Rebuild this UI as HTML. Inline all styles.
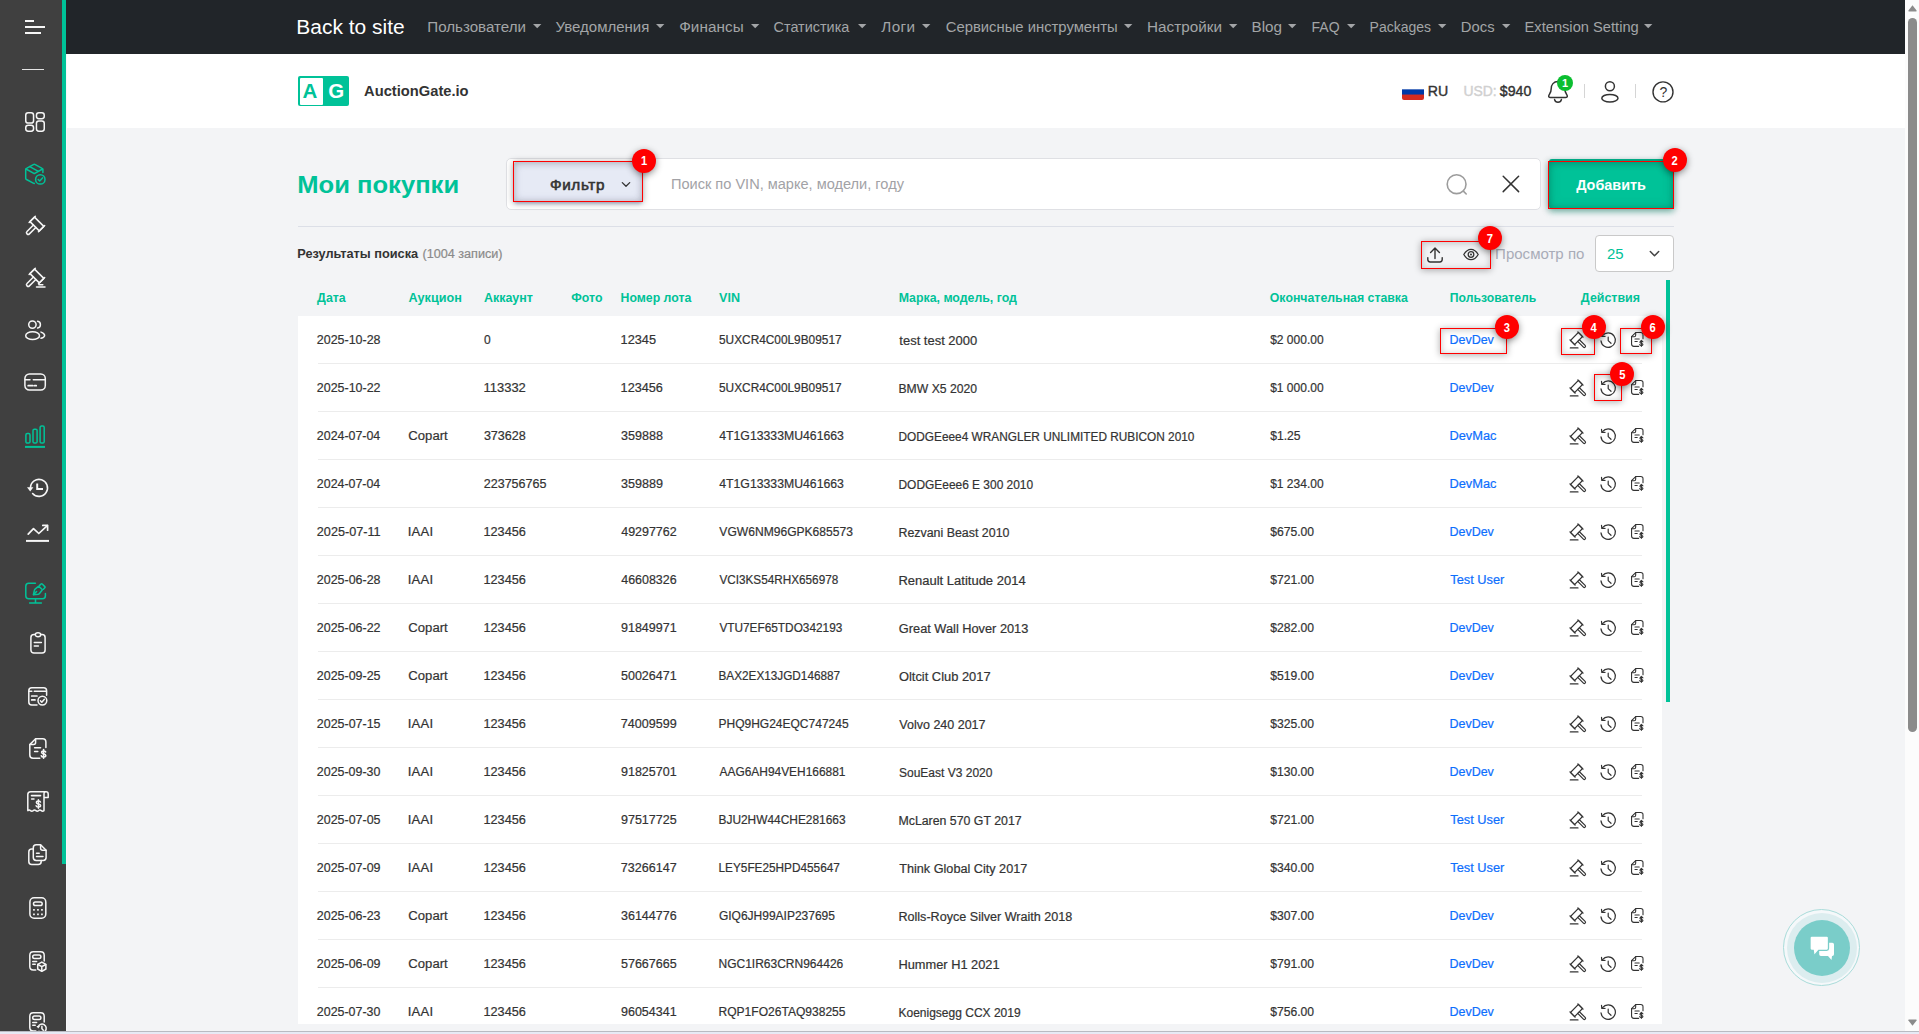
<!DOCTYPE html>
<html><head><meta charset="utf-8"><title>Мои покупки</title>
<style>
html,body{margin:0;padding:0;}
body{width:1919px;height:1034px;overflow:hidden;position:relative;background:#f3f4f6;font-family:"Liberation Sans",sans-serif;}
.t{position:absolute;white-space:pre;transform-origin:0 50%;}
svg{overflow:visible;}
</style></head><body>
<div style="position:absolute;left:66px;top:54px;width:1839px;height:74px;background:#fff;"></div>
<div style="position:absolute;left:66px;top:0px;width:1839px;height:54px;background:#212529;"></div>
<div style="position:absolute;left:0px;top:0px;width:66px;height:1031px;background:#404040;"></div>
<div style="position:absolute;left:62px;top:0px;width:4px;height:864px;background:#00c298;"></div>
<div style="position:absolute;left:66px;top:54px;width:1px;height:977px;background:#f8f8fa;"></div>
<div style="position:absolute;left:1905px;top:0px;width:14px;height:1031px;background:#fcfcfc;"></div>
<div style="position:absolute;left:1908px;top:18px;width:9px;height:714px;background:#8b8b8b;border-radius:5px;"></div>
<svg style="position:absolute;left:1908px;top:5px;" width="9" height="7" viewBox="0 0 9 7" fill="none"><path d="M4.5 0.3 L8.6 5.6 Q8.9 6.6 8 6.6 L1 6.6 Q0.1 6.6 0.4 5.6 Z" fill="#8b8b8b"/></svg>
<svg style="position:absolute;left:1908px;top:1019px;" width="9" height="7" viewBox="0 0 9 7" fill="none"><path d="M4.5 6.7 L8.6 1.4 Q8.9 0.4 8 0.4 L1 0.4 Q0.1 0.4 0.4 1.4 Z" fill="#8b8b8b"/></svg>
<div style="position:absolute;left:0px;top:1031px;width:1919px;height:3px;background:#e7eaf5;"></div>
<div style="position:absolute;left:0px;top:1031px;width:1919px;height:1px;background:#b9bbc2;"></div>
<span class="t" style="left:296px;top:16px;font-size:20px;line-height:20px;letter-spacing:0.000px;color:#fff;transform:translate(0.30px,0.82px) scaleX(1.0483);">Back to site</span>
<span class="t" style="left:427px;top:20px;font-size:14px;line-height:14px;letter-spacing:0.000px;color:#a3a5a7;transform:translate(0.29px,0.05px) scaleX(1.0797);">Пользователи</span>
<svg style="position:absolute;left:532.5px;top:23.8px;" width="8.4" height="4.4" viewBox="0 0 8.4 4.4" fill="none"><path d="M0 0 L8.4 0 L4.2 4.3 Z" fill="#a3a5a7"/></svg>
<span class="t" style="left:555px;top:20px;font-size:14px;line-height:14px;letter-spacing:0.000px;color:#a3a5a7;transform:translate(0.60px,0.05px) scaleX(1.0701);">Уведомления</span>
<svg style="position:absolute;left:655.8px;top:23.8px;" width="8.4" height="4.4" viewBox="0 0 8.4 4.4" fill="none"><path d="M0 0 L8.4 0 L4.2 4.3 Z" fill="#a3a5a7"/></svg>
<span class="t" style="left:679px;top:20px;font-size:14px;line-height:14px;letter-spacing:0.066px;color:#a3a5a7;transform:translate(0.18px,0.05px) scaleX(1.0900);">Финансы</span>
<svg style="position:absolute;left:750.8px;top:23.8px;" width="8.4" height="4.4" viewBox="0 0 8.4 4.4" fill="none"><path d="M0 0 L8.4 0 L4.2 4.3 Z" fill="#a3a5a7"/></svg>
<span class="t" style="left:773px;top:20px;font-size:14px;line-height:14px;letter-spacing:0.000px;color:#a3a5a7;transform:translate(0.53px,0.05px) scaleX(1.0309);">Статистика</span>
<svg style="position:absolute;left:857.5px;top:23.8px;" width="8.4" height="4.4" viewBox="0 0 8.4 4.4" fill="none"><path d="M0 0 L8.4 0 L4.2 4.3 Z" fill="#a3a5a7"/></svg>
<span class="t" style="left:881px;top:20px;font-size:14px;line-height:14px;letter-spacing:0.314px;color:#a3a5a7;transform:translate(0.36px,0.05px) scaleX(1.0900);">Логи</span>
<svg style="position:absolute;left:921.8px;top:23.8px;" width="8.4" height="4.4" viewBox="0 0 8.4 4.4" fill="none"><path d="M0 0 L8.4 0 L4.2 4.3 Z" fill="#a3a5a7"/></svg>
<span class="t" style="left:945px;top:20px;font-size:14px;line-height:14px;letter-spacing:0.000px;color:#a3a5a7;transform:translate(0.71px,0.05px) scaleX(1.0588);">Сервисные инструменты</span>
<svg style="position:absolute;left:1124.1px;top:23.8px;" width="8.4" height="4.4" viewBox="0 0 8.4 4.4" fill="none"><path d="M0 0 L8.4 0 L4.2 4.3 Z" fill="#a3a5a7"/></svg>
<span class="t" style="left:1147px;top:20px;font-size:14px;line-height:14px;letter-spacing:0.009px;color:#a3a5a7;transform:translate(0.07px,0.05px) scaleX(1.0900);">Настройки</span>
<svg style="position:absolute;left:1228.5px;top:23.8px;" width="8.4" height="4.4" viewBox="0 0 8.4 4.4" fill="none"><path d="M0 0 L8.4 0 L4.2 4.3 Z" fill="#a3a5a7"/></svg>
<span class="t" style="left:1251px;top:20px;font-size:14px;line-height:14px;letter-spacing:-0.000px;color:#a3a5a7;transform:translate(0.48px,0.05px) scaleX(1.0885);">Blog</span>
<svg style="position:absolute;left:1288.1px;top:23.8px;" width="8.4" height="4.4" viewBox="0 0 8.4 4.4" fill="none"><path d="M0 0 L8.4 0 L4.2 4.3 Z" fill="#a3a5a7"/></svg>
<span class="t" style="left:1311px;top:20px;font-size:14px;line-height:14px;letter-spacing:0.000px;color:#a3a5a7;transform:translate(0.57px,0.05px) scaleX(1.0001);">FAQ</span>
<svg style="position:absolute;left:1346.5px;top:23.8px;" width="8.4" height="4.4" viewBox="0 0 8.4 4.4" fill="none"><path d="M0 0 L8.4 0 L4.2 4.3 Z" fill="#a3a5a7"/></svg>
<span class="t" style="left:1369px;top:20px;font-size:14px;line-height:14px;letter-spacing:0.000px;color:#a3a5a7;transform:translate(0.57px,0.05px) scaleX(1.0001);">Packages</span>
<svg style="position:absolute;left:1437.5px;top:23.8px;" width="8.4" height="4.4" viewBox="0 0 8.4 4.4" fill="none"><path d="M0 0 L8.4 0 L4.2 4.3 Z" fill="#a3a5a7"/></svg>
<span class="t" style="left:1460px;top:20px;font-size:14px;line-height:14px;letter-spacing:0.000px;color:#a3a5a7;transform:translate(0.81px,0.05px) scaleX(1.0579);">Docs</span>
<svg style="position:absolute;left:1501.5px;top:23.8px;" width="8.4" height="4.4" viewBox="0 0 8.4 4.4" fill="none"><path d="M0 0 L8.4 0 L4.2 4.3 Z" fill="#a3a5a7"/></svg>
<span class="t" style="left:1524px;top:20px;font-size:14px;line-height:14px;letter-spacing:-0.000px;color:#a3a5a7;transform:translate(0.52px,0.05px) scaleX(1.0480);">Extension Setting</span>
<svg style="position:absolute;left:1644.1px;top:23.8px;" width="8.4" height="4.4" viewBox="0 0 8.4 4.4" fill="none"><path d="M0 0 L8.4 0 L4.2 4.3 Z" fill="#a3a5a7"/></svg>
<div style="position:absolute;left:298px;top:76px;width:51px;height:30px;background:#00c298;border-radius:2px;"></div>
<div style="position:absolute;left:299.5px;top:77.5px;width:23.5px;height:27px;background:#fff;border-radius:1px;"></div>
<span class="t" style="left:302px;top:80px;font-size:20.5px;line-height:20.5px;letter-spacing:0.000px;color:#00c298;transform:translate(0.50px,0.85px) scaleX(1.0001);font-weight:bold;">A</span>
<span class="t" style="left:328px;top:80px;font-size:20.5px;line-height:20.5px;letter-spacing:0.000px;color:#fff;transform:translate(0.32px,0.85px) scaleX(1.0001);font-weight:bold;">G</span>
<span class="t" style="left:364px;top:84px;font-size:14px;line-height:14px;letter-spacing:-0.000px;color:#333;transform:translate(0.11px,0.05px) scaleX(1.0494);font-weight:bold;">AuctionGate.io</span>
<div style="position:absolute;left:1402px;top:84px;width:22px;height:16px;border-radius:2px;overflow:hidden;background:linear-gradient(#fff 0,#fff 31%,#0039a6 36%,#0039a6 62%,#d52b1e 70%,#d52b1e 100%);"></div>
<span class="t" style="left:1427px;top:84px;font-size:14px;line-height:14px;letter-spacing:0.000px;color:#333;transform:translate(0.66px,0.15px) scaleX(1.0111);-webkit-text-stroke:0.4px #333;">RU</span>
<span class="t" style="left:1463px;top:84px;font-size:14px;line-height:14px;letter-spacing:0.000px;color:#d0d0d0;transform:translate(0.38px,0.15px) scaleX(0.9935);-webkit-text-stroke:0.4px #d0d0d0;">USD:</span>
<span class="t" style="left:1499px;top:84px;font-size:14px;line-height:14px;letter-spacing:0.000px;color:#333;transform:translate(0.87px,0.15px) scaleX(1.0098);-webkit-text-stroke:0.4px #333;">$940</span>
<div style="position:absolute;left:1584px;top:84px;width:1px;height:14px;background:#d5d5d5;"></div>
<div style="position:absolute;left:1635px;top:84px;width:1px;height:14px;background:#d5d5d5;"></div>
<span class="t" style="left:297px;top:174px;font-size:23.5px;line-height:23.5px;letter-spacing:0.000px;color:#00c298;transform:translate(0.27px,0.41px) scaleX(1.0884);font-weight:bold;">Мои покупки</span>
<div style="position:absolute;left:506px;top:158px;width:1033px;height:50px;background:#fff;border:1px solid #dfe0e4;border-radius:5px;"></div>
<div style="position:absolute;left:514px;top:162px;width:128px;height:39px;background:#e6eaf5;border-radius:3px;box-shadow:0 3px 3px rgba(190,198,225,.75), inset 0 0 10px rgba(120,130,170,.18);"></div>
<span class="t" style="left:549px;top:178px;font-size:14px;line-height:14px;letter-spacing:0.575px;color:#333;transform:translate(0.98px,0.05px) scaleX(1.0900);-webkit-text-stroke:0.4px #333;-webkit-text-stroke:0.55px #333;">Фильтр</span>
<svg style="position:absolute;left:620.5px;top:181.4px;" width="10" height="7" viewBox="0 0 10 7" fill="none"><path d="M1.3 1.6 L5 5.2 L8.7 1.6" stroke="#333" stroke-width="1.3" stroke-linecap="round" stroke-linejoin="round"/></svg>
<span class="t" style="left:670px;top:177px;font-size:14px;line-height:14px;letter-spacing:0.000px;color:#a2a2a6;transform:translate(0.93px,0.15px) scaleX(1.0405);">Поиск по VIN, марке, модели, году</span>
<div style="position:absolute;left:1548.5px;top:159px;width:125px;height:49.5px;background:#00c298;border-radius:3px;box-shadow:0 3px 6px rgba(0,194,152,.35), inset 0 0 12px rgba(0,120,90,.25);"></div>
<span class="t" style="left:1576px;top:178px;font-size:14px;line-height:14px;letter-spacing:0.000px;color:#fff;transform:translate(0.17px,0.15px) scaleX(1.0279);font-weight:bold;">Добавить</span>
<div style="position:absolute;left:298px;top:226px;width:1375.5px;height:1px;background:#dcdfe7;"></div>
<span class="t" style="left:297px;top:248px;font-size:12px;line-height:12px;letter-spacing:0.000px;color:#333;transform:translate(0.20px,0.09px) scaleX(1.0630);font-weight:bold;">Результаты поиска</span>
<span class="t" style="left:422px;top:248px;font-size:12px;line-height:12px;letter-spacing:0.000px;color:#8a8a8a;transform:translate(0.46px,0.09px) scaleX(1.0519);-webkit-text-stroke:0.2px #8a8a8a;">(1004 записи)</span>
<span class="t" style="left:1495px;top:247px;font-size:14px;line-height:14px;letter-spacing:0.000px;color:#a9acb8;transform:translate(0.09px,0.35px) scaleX(1.0736);">Просмотр по</span>
<div style="position:absolute;left:1595px;top:235px;width:77px;height:35px;background:#fff;border:1px solid #c9c9c9;border-radius:4px;"></div>
<span class="t" style="left:1607px;top:247px;font-size:14px;line-height:14px;letter-spacing:0.000px;color:#00c298;transform:translate(0.00px,0.15px) scaleX(1.0667);">25</span>
<svg style="position:absolute;left:1649px;top:250px;" width="11" height="8" viewBox="0 0 11 8" fill="none"><path d="M1.3 1.5 L5.5 5.8 L9.7 1.5" stroke="#444" stroke-width="1.5" stroke-linecap="round" stroke-linejoin="round"/></svg>
<div style="position:absolute;left:298px;top:316px;width:1364px;height:708px;background:#fff;"></div>
<div style="position:absolute;left:1666px;top:280px;width:4px;height:422px;background:#00c298;"></div>
<span class="t" style="left:317px;top:291px;font-size:12px;line-height:12px;letter-spacing:0.000px;color:#00c298;transform:translate(0.07px,0.84px) scaleX(1.0306);font-weight:bold;">Дата</span>
<span class="t" style="left:408px;top:291px;font-size:12px;line-height:12px;letter-spacing:-0.000px;color:#00c298;transform:translate(0.44px,0.84px) scaleX(1.0525);font-weight:bold;">Аукцион</span>
<span class="t" style="left:483px;top:291px;font-size:12px;line-height:12px;letter-spacing:0.000px;color:#00c298;transform:translate(0.94px,0.84px) scaleX(1.0387);font-weight:bold;">Аккаунт</span>
<span class="t" style="left:571px;top:291px;font-size:12px;line-height:12px;letter-spacing:0.000px;color:#00c298;transform:translate(0.31px,0.84px) scaleX(1.0271);font-weight:bold;">Фото</span>
<span class="t" style="left:620px;top:291px;font-size:12px;line-height:12px;letter-spacing:0.000px;color:#00c298;transform:translate(0.53px,0.84px) scaleX(1.0238);font-weight:bold;">Номер лота</span>
<span class="t" style="left:719px;top:291px;font-size:12px;line-height:12px;letter-spacing:0.000px;color:#00c298;transform:translate(0.07px,0.84px) scaleX(1.0458);font-weight:bold;">VIN</span>
<span class="t" style="left:898px;top:291px;font-size:12px;line-height:12px;letter-spacing:0.000px;color:#00c298;transform:translate(0.63px,0.84px) scaleX(1.0289);font-weight:bold;">Марка, модель, год</span>
<span class="t" style="left:1269px;top:291px;font-size:12px;line-height:12px;letter-spacing:0.000px;color:#00c298;transform:translate(0.79px,0.84px) scaleX(1.0267);font-weight:bold;">Окончательная ставка</span>
<span class="t" style="left:1449px;top:291px;font-size:12px;line-height:12px;letter-spacing:0.000px;color:#00c298;transform:translate(0.74px,0.84px) scaleX(1.0170);font-weight:bold;">Пользователь</span>
<span class="t" style="left:1580px;top:291px;font-size:12px;line-height:12px;letter-spacing:-0.000px;color:#00c298;transform:translate(0.87px,0.84px) scaleX(1.0357);font-weight:bold;">Действия</span>
<span class="t" style="left:316px;top:333px;font-size:12px;line-height:12px;letter-spacing:-0.000px;color:#333;transform:translate(0.85px,0.84px) scaleX(1.0373);-webkit-text-stroke:0.2px #333;">2025-10-28</span>
<span class="t" style="left:483px;top:333px;font-size:12px;line-height:12px;letter-spacing:0.000px;color:#333;transform:translate(0.90px,0.84px) scaleX(1.0001);-webkit-text-stroke:0.2px #333;">0</span>
<span class="t" style="left:620px;top:333px;font-size:12px;line-height:12px;letter-spacing:0.000px;color:#333;transform:translate(0.57px,0.84px) scaleX(1.0625);-webkit-text-stroke:0.2px #333;">12345</span>
<span class="t" style="left:719px;top:333px;font-size:12px;line-height:12px;letter-spacing:0.000px;color:#333;transform:translate(0.01px,0.84px) scaleX(0.9878);-webkit-text-stroke:0.2px #333;">5UXCR4C00L9B09517</span>
<span class="t" style="left:899px;top:334px;font-size:12px;line-height:12px;letter-spacing:0.000px;color:#333;transform:translate(0.37px,0.84px) scaleX(1.0797);-webkit-text-stroke:0.2px #333;">test test 2000</span>
<span class="t" style="left:1270px;top:333px;font-size:12px;line-height:12px;letter-spacing:0.000px;color:#333;transform:translate(0.17px,0.84px) scaleX(1.0001);-webkit-text-stroke:0.2px #333;">$2 000.00</span>
<span class="t" style="left:1449px;top:333px;font-size:12px;line-height:12px;letter-spacing:0.000px;color:#0d6efd;transform:translate(0.46px,0.84px) scaleX(1.0402);-webkit-text-stroke:0.2px #0d6efd;">DevDev</span>
<div style="position:absolute;left:318px;top:363px;width:1324px;height:1px;background:#ececec;"></div>
<span class="t" style="left:316px;top:381px;font-size:12px;line-height:12px;letter-spacing:-0.000px;color:#333;transform:translate(0.85px,0.84px) scaleX(1.0373);-webkit-text-stroke:0.2px #333;">2025-10-22</span>
<span class="t" style="left:483px;top:381px;font-size:12px;line-height:12px;letter-spacing:0.000px;color:#333;transform:translate(0.45px,0.84px) scaleX(1.0824);-webkit-text-stroke:0.2px #333;">113332</span>
<span class="t" style="left:620px;top:381px;font-size:12px;line-height:12px;letter-spacing:0.000px;color:#333;transform:translate(0.57px,0.84px) scaleX(1.0579);-webkit-text-stroke:0.2px #333;">123456</span>
<span class="t" style="left:719px;top:381px;font-size:12px;line-height:12px;letter-spacing:0.000px;color:#333;transform:translate(0.01px,0.84px) scaleX(0.9878);-webkit-text-stroke:0.2px #333;">5UXCR4C00L9B09517</span>
<span class="t" style="left:898px;top:382px;font-size:12px;line-height:12px;letter-spacing:0.000px;color:#333;transform:translate(0.48px,0.84px) scaleX(1.0158);-webkit-text-stroke:0.2px #333;">BMW X5 2020</span>
<span class="t" style="left:1270px;top:381px;font-size:12px;line-height:12px;letter-spacing:0.000px;color:#333;transform:translate(0.17px,0.84px) scaleX(1.0001);-webkit-text-stroke:0.2px #333;">$1 000.00</span>
<span class="t" style="left:1449px;top:381px;font-size:12px;line-height:12px;letter-spacing:0.000px;color:#0d6efd;transform:translate(0.46px,0.84px) scaleX(1.0402);-webkit-text-stroke:0.2px #0d6efd;">DevDev</span>
<div style="position:absolute;left:318px;top:411px;width:1324px;height:1px;background:#ececec;"></div>
<span class="t" style="left:316px;top:429px;font-size:12px;line-height:12px;letter-spacing:0.000px;color:#333;transform:translate(0.85px,0.84px) scaleX(1.0331);-webkit-text-stroke:0.2px #333;">2024-07-04</span>
<span class="t" style="left:408px;top:429px;font-size:12px;line-height:12px;letter-spacing:0.033px;color:#333;transform:translate(0.32px,0.84px) scaleX(1.0900);-webkit-text-stroke:0.2px #333;">Copart</span>
<span class="t" style="left:483px;top:429px;font-size:12px;line-height:12px;letter-spacing:-0.000px;color:#333;transform:translate(0.88px,0.84px) scaleX(1.0477);-webkit-text-stroke:0.2px #333;">373628</span>
<span class="t" style="left:620px;top:429px;font-size:12px;line-height:12px;letter-spacing:-0.000px;color:#333;transform:translate(0.98px,0.84px) scaleX(1.0477);-webkit-text-stroke:0.2px #333;">359888</span>
<span class="t" style="left:719px;top:429px;font-size:12px;line-height:12px;letter-spacing:0.000px;color:#333;transform:translate(0.24px,0.84px) scaleX(1.0210);-webkit-text-stroke:0.2px #333;">4T1G13333MU461663</span>
<span class="t" style="left:898px;top:430px;font-size:12px;line-height:12px;letter-spacing:0.000px;color:#333;transform:translate(0.51px,0.84px) scaleX(0.9862);-webkit-text-stroke:0.2px #333;">DODGEeee4 WRANGLER UNLIMITED RUBICON 2010</span>
<span class="t" style="left:1270px;top:429px;font-size:12px;line-height:12px;letter-spacing:0.000px;color:#333;transform:translate(0.17px,0.84px) scaleX(1.0111);-webkit-text-stroke:0.2px #333;">$1.25</span>
<span class="t" style="left:1449px;top:429px;font-size:12px;line-height:12px;letter-spacing:0.000px;color:#0d6efd;transform:translate(0.43px,0.84px) scaleX(1.0674);-webkit-text-stroke:0.2px #0d6efd;">DevMac</span>
<div style="position:absolute;left:318px;top:459px;width:1324px;height:1px;background:#ececec;"></div>
<span class="t" style="left:316px;top:477px;font-size:12px;line-height:12px;letter-spacing:0.000px;color:#333;transform:translate(0.85px,0.84px) scaleX(1.0331);-webkit-text-stroke:0.2px #333;">2024-07-04</span>
<span class="t" style="left:483px;top:477px;font-size:12px;line-height:12px;letter-spacing:-0.000px;color:#333;transform:translate(0.75px,0.84px) scaleX(1.0436);-webkit-text-stroke:0.2px #333;">223756765</span>
<span class="t" style="left:620px;top:477px;font-size:12px;line-height:12px;letter-spacing:-0.000px;color:#333;transform:translate(0.98px,0.84px) scaleX(1.0477);-webkit-text-stroke:0.2px #333;">359889</span>
<span class="t" style="left:719px;top:477px;font-size:12px;line-height:12px;letter-spacing:0.000px;color:#333;transform:translate(0.24px,0.84px) scaleX(1.0210);-webkit-text-stroke:0.2px #333;">4T1G13333MU461663</span>
<span class="t" style="left:898px;top:478px;font-size:12px;line-height:12px;letter-spacing:0.000px;color:#333;transform:translate(0.51px,0.84px) scaleX(0.9940);-webkit-text-stroke:0.2px #333;">DODGEeee6 E 300 2010</span>
<span class="t" style="left:1270px;top:477px;font-size:12px;line-height:12px;letter-spacing:0.000px;color:#333;transform:translate(0.17px,0.84px) scaleX(1.0001);-webkit-text-stroke:0.2px #333;">$1 234.00</span>
<span class="t" style="left:1449px;top:477px;font-size:12px;line-height:12px;letter-spacing:0.000px;color:#0d6efd;transform:translate(0.43px,0.84px) scaleX(1.0674);-webkit-text-stroke:0.2px #0d6efd;">DevMac</span>
<div style="position:absolute;left:318px;top:507px;width:1324px;height:1px;background:#ececec;"></div>
<span class="t" style="left:316px;top:525px;font-size:12px;line-height:12px;letter-spacing:0.000px;color:#333;transform:translate(0.84px,0.84px) scaleX(1.0526);-webkit-text-stroke:0.2px #333;">2025-07-11</span>
<span class="t" style="left:407px;top:525px;font-size:12px;line-height:12px;letter-spacing:0.200px;color:#333;transform:translate(0.77px,0.84px) scaleX(1.0900);-webkit-text-stroke:0.2px #333;">IAAI</span>
<span class="t" style="left:483px;top:525px;font-size:12px;line-height:12px;letter-spacing:0.000px;color:#333;transform:translate(0.47px,0.84px) scaleX(1.0579);-webkit-text-stroke:0.2px #333;">123456</span>
<span class="t" style="left:621px;top:525px;font-size:12px;line-height:12px;letter-spacing:0.000px;color:#333;transform:translate(0.24px,0.84px) scaleX(1.0371);-webkit-text-stroke:0.2px #333;">49297762</span>
<span class="t" style="left:719px;top:525px;font-size:12px;line-height:12px;letter-spacing:0.000px;color:#333;transform:translate(0.37px,0.84px) scaleX(1.0061);-webkit-text-stroke:0.2px #333;">VGW6NM96GPK685573</span>
<span class="t" style="left:898px;top:526px;font-size:12px;line-height:12px;letter-spacing:0.000px;color:#333;transform:translate(0.47px,0.84px) scaleX(1.0330);-webkit-text-stroke:0.2px #333;">Rezvani Beast 2010</span>
<span class="t" style="left:1270px;top:525px;font-size:12px;line-height:12px;letter-spacing:0.000px;color:#333;transform:translate(0.17px,0.84px) scaleX(1.0122);-webkit-text-stroke:0.2px #333;">$675.00</span>
<span class="t" style="left:1449px;top:525px;font-size:12px;line-height:12px;letter-spacing:0.000px;color:#0d6efd;transform:translate(0.46px,0.84px) scaleX(1.0402);-webkit-text-stroke:0.2px #0d6efd;">DevDev</span>
<div style="position:absolute;left:318px;top:555px;width:1324px;height:1px;background:#ececec;"></div>
<span class="t" style="left:316px;top:573px;font-size:12px;line-height:12px;letter-spacing:-0.000px;color:#333;transform:translate(0.85px,0.84px) scaleX(1.0373);-webkit-text-stroke:0.2px #333;">2025-06-28</span>
<span class="t" style="left:407px;top:573px;font-size:12px;line-height:12px;letter-spacing:0.200px;color:#333;transform:translate(0.77px,0.84px) scaleX(1.0900);-webkit-text-stroke:0.2px #333;">IAAI</span>
<span class="t" style="left:483px;top:573px;font-size:12px;line-height:12px;letter-spacing:0.000px;color:#333;transform:translate(0.47px,0.84px) scaleX(1.0579);-webkit-text-stroke:0.2px #333;">123456</span>
<span class="t" style="left:621px;top:573px;font-size:12px;line-height:12px;letter-spacing:0.000px;color:#333;transform:translate(0.24px,0.84px) scaleX(1.0371);-webkit-text-stroke:0.2px #333;">46608326</span>
<span class="t" style="left:719px;top:573px;font-size:12px;line-height:12px;letter-spacing:0.000px;color:#333;transform:translate(0.38px,0.84px) scaleX(0.9789);-webkit-text-stroke:0.2px #333;">VCI3KS54RHX656978</span>
<span class="t" style="left:898px;top:574px;font-size:12px;line-height:12px;letter-spacing:0.000px;color:#333;transform:translate(0.42px,0.84px) scaleX(1.0833);-webkit-text-stroke:0.2px #333;">Renault Latitude 2014</span>
<span class="t" style="left:1270px;top:573px;font-size:12px;line-height:12px;letter-spacing:0.000px;color:#333;transform:translate(0.17px,0.84px) scaleX(1.0122);-webkit-text-stroke:0.2px #333;">$721.00</span>
<span class="t" style="left:1450px;top:573px;font-size:12px;line-height:12px;letter-spacing:0.000px;color:#0d6efd;transform:translate(0.23px,0.84px) scaleX(1.0673);-webkit-text-stroke:0.2px #0d6efd;">Test User</span>
<div style="position:absolute;left:318px;top:603px;width:1324px;height:1px;background:#ececec;"></div>
<span class="t" style="left:316px;top:621px;font-size:12px;line-height:12px;letter-spacing:-0.000px;color:#333;transform:translate(0.85px,0.84px) scaleX(1.0373);-webkit-text-stroke:0.2px #333;">2025-06-22</span>
<span class="t" style="left:408px;top:621px;font-size:12px;line-height:12px;letter-spacing:0.033px;color:#333;transform:translate(0.32px,0.84px) scaleX(1.0900);-webkit-text-stroke:0.2px #333;">Copart</span>
<span class="t" style="left:483px;top:621px;font-size:12px;line-height:12px;letter-spacing:0.000px;color:#333;transform:translate(0.47px,0.84px) scaleX(1.0579);-webkit-text-stroke:0.2px #333;">123456</span>
<span class="t" style="left:620px;top:621px;font-size:12px;line-height:12px;letter-spacing:0.000px;color:#333;transform:translate(0.98px,0.84px) scaleX(1.0421);-webkit-text-stroke:0.2px #333;">91849971</span>
<span class="t" style="left:719px;top:621px;font-size:12px;line-height:12px;letter-spacing:0.000px;color:#333;transform:translate(0.38px,0.84px) scaleX(0.9855);-webkit-text-stroke:0.2px #333;">VTU7EF65TDO342193</span>
<span class="t" style="left:898px;top:622px;font-size:12px;line-height:12px;letter-spacing:0.000px;color:#333;transform:translate(0.83px,0.84px) scaleX(1.0650);-webkit-text-stroke:0.2px #333;">Great Wall Hover 2013</span>
<span class="t" style="left:1270px;top:621px;font-size:12px;line-height:12px;letter-spacing:0.000px;color:#333;transform:translate(0.17px,0.84px) scaleX(1.0122);-webkit-text-stroke:0.2px #333;">$282.00</span>
<span class="t" style="left:1449px;top:621px;font-size:12px;line-height:12px;letter-spacing:0.000px;color:#0d6efd;transform:translate(0.46px,0.84px) scaleX(1.0402);-webkit-text-stroke:0.2px #0d6efd;">DevDev</span>
<div style="position:absolute;left:318px;top:651px;width:1324px;height:1px;background:#ececec;"></div>
<span class="t" style="left:316px;top:669px;font-size:12px;line-height:12px;letter-spacing:-0.000px;color:#333;transform:translate(0.85px,0.84px) scaleX(1.0373);-webkit-text-stroke:0.2px #333;">2025-09-25</span>
<span class="t" style="left:408px;top:669px;font-size:12px;line-height:12px;letter-spacing:0.033px;color:#333;transform:translate(0.32px,0.84px) scaleX(1.0900);-webkit-text-stroke:0.2px #333;">Copart</span>
<span class="t" style="left:483px;top:669px;font-size:12px;line-height:12px;letter-spacing:0.000px;color:#333;transform:translate(0.47px,0.84px) scaleX(1.0579);-webkit-text-stroke:0.2px #333;">123456</span>
<span class="t" style="left:620px;top:669px;font-size:12px;line-height:12px;letter-spacing:0.000px;color:#333;transform:translate(0.98px,0.84px) scaleX(1.0421);-webkit-text-stroke:0.2px #333;">50026471</span>
<span class="t" style="left:718px;top:669px;font-size:12px;line-height:12px;letter-spacing:0.000px;color:#333;transform:translate(0.52px,0.84px) scaleX(0.9796);-webkit-text-stroke:0.2px #333;">BAX2EX13JGD146887</span>
<span class="t" style="left:898px;top:670px;font-size:12px;line-height:12px;letter-spacing:0.000px;color:#333;transform:translate(0.96px,0.84px) scaleX(1.0726);-webkit-text-stroke:0.2px #333;">Oltcit Club 2017</span>
<span class="t" style="left:1270px;top:669px;font-size:12px;line-height:12px;letter-spacing:0.000px;color:#333;transform:translate(0.17px,0.84px) scaleX(1.0122);-webkit-text-stroke:0.2px #333;">$519.00</span>
<span class="t" style="left:1449px;top:669px;font-size:12px;line-height:12px;letter-spacing:0.000px;color:#0d6efd;transform:translate(0.46px,0.84px) scaleX(1.0402);-webkit-text-stroke:0.2px #0d6efd;">DevDev</span>
<div style="position:absolute;left:318px;top:699px;width:1324px;height:1px;background:#ececec;"></div>
<span class="t" style="left:316px;top:717px;font-size:12px;line-height:12px;letter-spacing:-0.000px;color:#333;transform:translate(0.85px,0.84px) scaleX(1.0373);-webkit-text-stroke:0.2px #333;">2025-07-15</span>
<span class="t" style="left:407px;top:717px;font-size:12px;line-height:12px;letter-spacing:0.200px;color:#333;transform:translate(0.77px,0.84px) scaleX(1.0900);-webkit-text-stroke:0.2px #333;">IAAI</span>
<span class="t" style="left:483px;top:717px;font-size:12px;line-height:12px;letter-spacing:0.000px;color:#333;transform:translate(0.47px,0.84px) scaleX(1.0579);-webkit-text-stroke:0.2px #333;">123456</span>
<span class="t" style="left:620px;top:717px;font-size:12px;line-height:12px;letter-spacing:0.000px;color:#333;transform:translate(0.85px,0.84px) scaleX(1.0446);-webkit-text-stroke:0.2px #333;">74009599</span>
<span class="t" style="left:718px;top:717px;font-size:12px;line-height:12px;letter-spacing:0.000px;color:#333;transform:translate(0.50px,0.84px) scaleX(1.0001);-webkit-text-stroke:0.2px #333;">PHQ9HG24EQC747245</span>
<span class="t" style="left:899px;top:718px;font-size:12px;line-height:12px;letter-spacing:0.000px;color:#333;transform:translate(0.37px,0.84px) scaleX(1.0411);-webkit-text-stroke:0.2px #333;">Volvo 240 2017</span>
<span class="t" style="left:1270px;top:717px;font-size:12px;line-height:12px;letter-spacing:0.000px;color:#333;transform:translate(0.17px,0.84px) scaleX(1.0122);-webkit-text-stroke:0.2px #333;">$325.00</span>
<span class="t" style="left:1449px;top:717px;font-size:12px;line-height:12px;letter-spacing:0.000px;color:#0d6efd;transform:translate(0.46px,0.84px) scaleX(1.0402);-webkit-text-stroke:0.2px #0d6efd;">DevDev</span>
<div style="position:absolute;left:318px;top:747px;width:1324px;height:1px;background:#ececec;"></div>
<span class="t" style="left:316px;top:765px;font-size:12px;line-height:12px;letter-spacing:0.000px;color:#333;transform:translate(0.85px,0.84px) scaleX(1.0352);-webkit-text-stroke:0.2px #333;">2025-09-30</span>
<span class="t" style="left:407px;top:765px;font-size:12px;line-height:12px;letter-spacing:0.200px;color:#333;transform:translate(0.77px,0.84px) scaleX(1.0900);-webkit-text-stroke:0.2px #333;">IAAI</span>
<span class="t" style="left:483px;top:765px;font-size:12px;line-height:12px;letter-spacing:0.000px;color:#333;transform:translate(0.47px,0.84px) scaleX(1.0579);-webkit-text-stroke:0.2px #333;">123456</span>
<span class="t" style="left:620px;top:765px;font-size:12px;line-height:12px;letter-spacing:0.000px;color:#333;transform:translate(0.98px,0.84px) scaleX(1.0421);-webkit-text-stroke:0.2px #333;">91825701</span>
<span class="t" style="left:719px;top:765px;font-size:12px;line-height:12px;letter-spacing:0.000px;color:#333;transform:translate(0.50px,0.84px) scaleX(0.9941);-webkit-text-stroke:0.2px #333;">AAG6AH94VEH166881</span>
<span class="t" style="left:898px;top:766px;font-size:12px;line-height:12px;letter-spacing:0.000px;color:#333;transform:translate(1.00px,0.84px) scaleX(1.0001);-webkit-text-stroke:0.2px #333;">SouEast V3 2020</span>
<span class="t" style="left:1270px;top:765px;font-size:12px;line-height:12px;letter-spacing:0.000px;color:#333;transform:translate(0.17px,0.84px) scaleX(1.0122);-webkit-text-stroke:0.2px #333;">$130.00</span>
<span class="t" style="left:1449px;top:765px;font-size:12px;line-height:12px;letter-spacing:0.000px;color:#0d6efd;transform:translate(0.46px,0.84px) scaleX(1.0402);-webkit-text-stroke:0.2px #0d6efd;">DevDev</span>
<div style="position:absolute;left:318px;top:795px;width:1324px;height:1px;background:#ececec;"></div>
<span class="t" style="left:316px;top:813px;font-size:12px;line-height:12px;letter-spacing:-0.000px;color:#333;transform:translate(0.85px,0.84px) scaleX(1.0373);-webkit-text-stroke:0.2px #333;">2025-07-05</span>
<span class="t" style="left:407px;top:813px;font-size:12px;line-height:12px;letter-spacing:0.200px;color:#333;transform:translate(0.77px,0.84px) scaleX(1.0900);-webkit-text-stroke:0.2px #333;">IAAI</span>
<span class="t" style="left:483px;top:813px;font-size:12px;line-height:12px;letter-spacing:0.000px;color:#333;transform:translate(0.47px,0.84px) scaleX(1.0579);-webkit-text-stroke:0.2px #333;">123456</span>
<span class="t" style="left:620px;top:813px;font-size:12px;line-height:12px;letter-spacing:0.000px;color:#333;transform:translate(0.98px,0.84px) scaleX(1.0421);-webkit-text-stroke:0.2px #333;">97517725</span>
<span class="t" style="left:718px;top:813px;font-size:12px;line-height:12px;letter-spacing:0.000px;color:#333;transform:translate(0.51px,0.84px) scaleX(0.9921);-webkit-text-stroke:0.2px #333;">BJU2HW44CHE281663</span>
<span class="t" style="left:898px;top:814px;font-size:12px;line-height:12px;letter-spacing:-0.000px;color:#333;transform:translate(0.47px,0.84px) scaleX(1.0275);-webkit-text-stroke:0.2px #333;">McLaren 570 GT 2017</span>
<span class="t" style="left:1270px;top:813px;font-size:12px;line-height:12px;letter-spacing:0.000px;color:#333;transform:translate(0.17px,0.84px) scaleX(1.0122);-webkit-text-stroke:0.2px #333;">$721.00</span>
<span class="t" style="left:1450px;top:813px;font-size:12px;line-height:12px;letter-spacing:0.000px;color:#0d6efd;transform:translate(0.23px,0.84px) scaleX(1.0673);-webkit-text-stroke:0.2px #0d6efd;">Test User</span>
<div style="position:absolute;left:318px;top:843px;width:1324px;height:1px;background:#ececec;"></div>
<span class="t" style="left:316px;top:861px;font-size:12px;line-height:12px;letter-spacing:-0.000px;color:#333;transform:translate(0.85px,0.84px) scaleX(1.0373);-webkit-text-stroke:0.2px #333;">2025-07-09</span>
<span class="t" style="left:407px;top:861px;font-size:12px;line-height:12px;letter-spacing:0.200px;color:#333;transform:translate(0.77px,0.84px) scaleX(1.0900);-webkit-text-stroke:0.2px #333;">IAAI</span>
<span class="t" style="left:483px;top:861px;font-size:12px;line-height:12px;letter-spacing:0.000px;color:#333;transform:translate(0.47px,0.84px) scaleX(1.0579);-webkit-text-stroke:0.2px #333;">123456</span>
<span class="t" style="left:620px;top:861px;font-size:12px;line-height:12px;letter-spacing:0.000px;color:#333;transform:translate(0.85px,0.84px) scaleX(1.0446);-webkit-text-stroke:0.2px #333;">73266147</span>
<span class="t" style="left:718px;top:861px;font-size:12px;line-height:12px;letter-spacing:0.000px;color:#333;transform:translate(0.52px,0.84px) scaleX(0.9830);-webkit-text-stroke:0.2px #333;">LEY5FE25HPD455647</span>
<span class="t" style="left:899px;top:862px;font-size:12px;line-height:12px;letter-spacing:-0.000px;color:#333;transform:translate(0.24px,0.84px) scaleX(1.0545);-webkit-text-stroke:0.2px #333;">Think Global City 2017</span>
<span class="t" style="left:1270px;top:861px;font-size:12px;line-height:12px;letter-spacing:0.000px;color:#333;transform:translate(0.17px,0.84px) scaleX(1.0122);-webkit-text-stroke:0.2px #333;">$340.00</span>
<span class="t" style="left:1450px;top:861px;font-size:12px;line-height:12px;letter-spacing:0.000px;color:#0d6efd;transform:translate(0.23px,0.84px) scaleX(1.0673);-webkit-text-stroke:0.2px #0d6efd;">Test User</span>
<div style="position:absolute;left:318px;top:891px;width:1324px;height:1px;background:#ececec;"></div>
<span class="t" style="left:316px;top:909px;font-size:12px;line-height:12px;letter-spacing:-0.000px;color:#333;transform:translate(0.85px,0.84px) scaleX(1.0373);-webkit-text-stroke:0.2px #333;">2025-06-23</span>
<span class="t" style="left:408px;top:909px;font-size:12px;line-height:12px;letter-spacing:0.033px;color:#333;transform:translate(0.32px,0.84px) scaleX(1.0900);-webkit-text-stroke:0.2px #333;">Copart</span>
<span class="t" style="left:483px;top:909px;font-size:12px;line-height:12px;letter-spacing:0.000px;color:#333;transform:translate(0.47px,0.84px) scaleX(1.0579);-webkit-text-stroke:0.2px #333;">123456</span>
<span class="t" style="left:620px;top:909px;font-size:12px;line-height:12px;letter-spacing:0.000px;color:#333;transform:translate(0.98px,0.84px) scaleX(1.0421);-webkit-text-stroke:0.2px #333;">36144776</span>
<span class="t" style="left:718px;top:909px;font-size:12px;line-height:12px;letter-spacing:0.000px;color:#333;transform:translate(0.88px,0.84px) scaleX(1.0001);-webkit-text-stroke:0.2px #333;">GIQ6JH99AIP237695</span>
<span class="t" style="left:898px;top:910px;font-size:12px;line-height:12px;letter-spacing:0.000px;color:#333;transform:translate(0.45px,0.84px) scaleX(1.0484);-webkit-text-stroke:0.2px #333;">Rolls-Royce Silver Wraith 2018</span>
<span class="t" style="left:1270px;top:909px;font-size:12px;line-height:12px;letter-spacing:0.000px;color:#333;transform:translate(0.17px,0.84px) scaleX(1.0122);-webkit-text-stroke:0.2px #333;">$307.00</span>
<span class="t" style="left:1449px;top:909px;font-size:12px;line-height:12px;letter-spacing:0.000px;color:#0d6efd;transform:translate(0.46px,0.84px) scaleX(1.0402);-webkit-text-stroke:0.2px #0d6efd;">DevDev</span>
<div style="position:absolute;left:318px;top:939px;width:1324px;height:1px;background:#ececec;"></div>
<span class="t" style="left:316px;top:957px;font-size:12px;line-height:12px;letter-spacing:-0.000px;color:#333;transform:translate(0.85px,0.84px) scaleX(1.0373);-webkit-text-stroke:0.2px #333;">2025-06-09</span>
<span class="t" style="left:408px;top:957px;font-size:12px;line-height:12px;letter-spacing:0.033px;color:#333;transform:translate(0.32px,0.84px) scaleX(1.0900);-webkit-text-stroke:0.2px #333;">Copart</span>
<span class="t" style="left:483px;top:957px;font-size:12px;line-height:12px;letter-spacing:0.000px;color:#333;transform:translate(0.47px,0.84px) scaleX(1.0579);-webkit-text-stroke:0.2px #333;">123456</span>
<span class="t" style="left:620px;top:957px;font-size:12px;line-height:12px;letter-spacing:0.000px;color:#333;transform:translate(0.98px,0.84px) scaleX(1.0421);-webkit-text-stroke:0.2px #333;">57667665</span>
<span class="t" style="left:718px;top:957px;font-size:12px;line-height:12px;letter-spacing:0.000px;color:#333;transform:translate(0.50px,0.84px) scaleX(1.0001);-webkit-text-stroke:0.2px #333;">NGC1IR63CRN964426</span>
<span class="t" style="left:898px;top:958px;font-size:12px;line-height:12px;letter-spacing:-0.000px;color:#333;transform:translate(0.43px,0.84px) scaleX(1.0685);-webkit-text-stroke:0.2px #333;">Hummer H1 2021</span>
<span class="t" style="left:1270px;top:957px;font-size:12px;line-height:12px;letter-spacing:0.000px;color:#333;transform:translate(0.17px,0.84px) scaleX(1.0122);-webkit-text-stroke:0.2px #333;">$791.00</span>
<span class="t" style="left:1449px;top:957px;font-size:12px;line-height:12px;letter-spacing:0.000px;color:#0d6efd;transform:translate(0.46px,0.84px) scaleX(1.0402);-webkit-text-stroke:0.2px #0d6efd;">DevDev</span>
<div style="position:absolute;left:318px;top:987px;width:1324px;height:1px;background:#ececec;"></div>
<span class="t" style="left:316px;top:1005px;font-size:12px;line-height:12px;letter-spacing:0.000px;color:#333;transform:translate(0.85px,0.84px) scaleX(1.0352);-webkit-text-stroke:0.2px #333;">2025-07-30</span>
<span class="t" style="left:407px;top:1005px;font-size:12px;line-height:12px;letter-spacing:0.200px;color:#333;transform:translate(0.77px,0.84px) scaleX(1.0900);-webkit-text-stroke:0.2px #333;">IAAI</span>
<span class="t" style="left:483px;top:1005px;font-size:12px;line-height:12px;letter-spacing:0.000px;color:#333;transform:translate(0.47px,0.84px) scaleX(1.0579);-webkit-text-stroke:0.2px #333;">123456</span>
<span class="t" style="left:620px;top:1005px;font-size:12px;line-height:12px;letter-spacing:0.000px;color:#333;transform:translate(0.98px,0.84px) scaleX(1.0421);-webkit-text-stroke:0.2px #333;">96054341</span>
<span class="t" style="left:718px;top:1005px;font-size:12px;line-height:12px;letter-spacing:0.000px;color:#333;transform:translate(0.50px,0.84px) scaleX(1.0040);-webkit-text-stroke:0.2px #333;">RQP1FO26TAQ938255</span>
<span class="t" style="left:898px;top:1006px;font-size:12px;line-height:12px;letter-spacing:0.000px;color:#333;transform:translate(0.50px,0.84px) scaleX(1.0001);-webkit-text-stroke:0.2px #333;">Koenigsegg CCX 2019</span>
<span class="t" style="left:1270px;top:1005px;font-size:12px;line-height:12px;letter-spacing:0.000px;color:#333;transform:translate(0.17px,0.84px) scaleX(1.0122);-webkit-text-stroke:0.2px #333;">$756.00</span>
<span class="t" style="left:1449px;top:1005px;font-size:12px;line-height:12px;letter-spacing:0.000px;color:#0d6efd;transform:translate(0.46px,0.84px) scaleX(1.0402);-webkit-text-stroke:0.2px #0d6efd;">DevDev</span>
<div style="position:absolute;left:25px;top:20px;width:9px;height:2px;background:#f6f6f6;"></div>
<div style="position:absolute;left:25px;top:26px;width:20px;height:2px;background:#f6f6f6;"></div>
<div style="position:absolute;left:25px;top:32px;width:16px;height:2px;background:#f6f6f6;"></div>
<div style="position:absolute;left:22px;top:69px;width:22px;height:1px;background:#e4e4e4;"></div>
<svg style="position:absolute;left:25px;top:112px;" width="20" height="20" viewBox="0 0 20 20" fill="none"><g stroke="#f6f6f6" stroke-width="1.5" stroke-linecap="round" stroke-linejoin="round"><rect x="0.75" y="0.75" width="7.8" height="10.3" rx="2.4"/><rect x="11.45" y="0.75" width="7.8" height="6" rx="2.4"/><rect x="0.75" y="13.25" width="7.8" height="6" rx="2.4"/><rect x="11.45" y="8.95" width="7.8" height="10.3" rx="2.4"/></g></svg>
<svg style="position:absolute;left:25px;top:164px;" width="21" height="21" viewBox="0 0 21 21" fill="none"><g stroke="#00c298" stroke-width="1.5" stroke-linecap="round" stroke-linejoin="round"><path d="M17.9 8.5 L17.9 5.6 Q17.9 4.7 17.1 4.3 L10.3 0.6 Q9.3 0.1 8.3 0.6 L1.5 4.3 Q0.7 4.7 0.7 5.6 L0.7 14.2 Q0.7 15.1 1.5 15.5 L8.3 19.2 Q9 19.6 9.3 19.4"/><path d="M1 5 L9.3 9.6 L17.6 5"/><path d="M4.8 2.6 L13.3 7.3"/><circle cx="15.3" cy="15.4" r="4.7"/><path d="M13.2 15.5 L14.7 17 L17.5 13.9"/></g></svg>
<svg style="position:absolute;left:25px;top:216px;" width="20" height="20" viewBox="0 0 20 20" fill="none"><g transform="translate(11.9 8) rotate(45)" stroke="#f6f6f6" stroke-width="1.5" stroke-linecap="round" stroke-linejoin="round"><rect x="-6.6" y="-3.2" width="13.2" height="6.4"/><path d="M-6.6 -4.4 L-6.6 4.4 M6.6 -4.4 L6.6 4.4"/><path d="M-1.7 3.2 L-1.7 12.3 A1.7 1.7 0 0 0 1.7 12.3 L1.7 3.2"/></g></svg>
<svg style="position:absolute;left:25px;top:268px;" width="20" height="20" viewBox="0 0 20 20" fill="none"><g transform="translate(11.9 8) rotate(45)" stroke="#f6f6f6" stroke-width="1.5" stroke-linecap="round" stroke-linejoin="round"><rect x="-6.6" y="-3.2" width="13.2" height="6.4"/><path d="M-6.6 -4.4 L-6.6 4.4 M6.6 -4.4 L6.6 4.4"/><path d="M-1.7 3.2 L-1.7 12.3 A1.7 1.7 0 0 0 1.7 12.3 L1.7 3.2"/></g><path d="M11.5 19.1 L20 19.1 M13.9 16.7 L17.8 16.7" stroke="#f6f6f6" stroke-width="1.5" stroke-linecap="round" stroke-linejoin="round"/></svg>
<svg style="position:absolute;left:25px;top:320px;" width="21" height="21" viewBox="0 0 21 21" fill="none"><g stroke="#f6f6f6" stroke-width="1.5" stroke-linecap="round" stroke-linejoin="round"><circle cx="7.4" cy="4.6" r="3.7"/><ellipse cx="7.6" cy="15.7" rx="6.9" ry="3.9"/><path d="M12.6 1.3 A3.4 3.4 0 0 1 12.6 8"/><path d="M16 12.1 Q19.6 13.4 19.6 15.4 Q19.6 17.2 16 18.3"/></g></svg>
<svg style="position:absolute;left:24px;top:373px;" width="22" height="18" viewBox="0 0 22 18" fill="none"><g stroke="#f6f6f6" stroke-width="1.5" stroke-linecap="round" stroke-linejoin="round"><rect x="0.9" y="0.9" width="20.4" height="16.2" rx="4.5"/><path d="M1.2 6.8 L6 6.8 M9.3 6.8 L21 6.8"/><path d="M4.2 12.7 L8.8 12.7 M10.6 12.7 L12.2 12.7" stroke-width="1.8"/></g></svg>
<svg style="position:absolute;left:25px;top:425px;" width="20" height="23" viewBox="0 0 20 23" fill="none"><g stroke="#00c298" stroke-width="1.5" stroke-linecap="round" stroke-linejoin="round"><rect x="0.9" y="8.6" width="4.1" height="9.5" rx="1.4"/><rect x="8" y="4.2" width="4.1" height="13.9" rx="1.4"/><rect x="15.1" y="1" width="4.1" height="17.1" rx="1.4"/></g><rect x="0" y="20.9" width="20" height="2" fill="#00c298"/></svg>
<svg style="position:absolute;left:26px;top:477px;" width="24" height="22" viewBox="0 0 24 22" fill="none"><g stroke="#f6f6f6" stroke-width="1.6" stroke-linecap="round" stroke-linejoin="round"><path d="M4.5 10.6 A8.5 8.5 0 1 1 6.6 16.5"/><path d="M11.2 6.4 L11.2 11.9 L17 11.9" stroke-width="2" stroke-linecap="butt" stroke-linejoin="miter"/></g><path d="M1 10.3 L7.4 10.3 L4.2 14.6 Z" fill="#f6f6f6"/></svg>
<svg style="position:absolute;left:26px;top:524px;" width="24" height="18" viewBox="0 0 24 18" fill="none"><g stroke="#f6f6f6" stroke-width="1.7" stroke-linecap="round" stroke-linejoin="round"><path d="M2.2 10.2 L7.5 4.6 L12.8 9.5 L21.3 1.6"/><path d="M16.8 1.4 L21.6 1.4 L21.6 6.2"/></g><rect x="0" y="15.9" width="23" height="2" fill="#f6f6f6"/></svg>
<svg style="position:absolute;left:25px;top:582px;" width="22" height="22" viewBox="0 0 22 22" fill="none"><g stroke="#00c298" stroke-width="1.5" stroke-linecap="round" stroke-linejoin="round"><path d="M10.4 1.3 L3.8 1.3 Q0.8 1.3 0.8 4.3 L0.8 13.8 Q0.8 16.8 3.8 16.8 L17.4 16.8 Q20.4 16.8 20.4 13.8 L20.4 11.5"/><path d="M10.5 16.8 L10.5 21 M4.6 21 L16.4 21"/><path d="M8.4 12.7 L9.4 8.3 Q9.6 7.4 10.3 6.9 L13.8 4.2 L17.4 7.8 L14.7 11.3 Q14.2 12 13.3 12.2 Z"/><path d="M14.6 3.4 L16 2 Q16.6 1.4 17.2 2 L19.8 4.6 Q20.4 5.2 19.8 5.8 L18.4 7.2"/><path d="M8.6 12.4 L11.6 9.5"/></g></svg>
<svg style="position:absolute;left:30px;top:632px;" width="16" height="22" viewBox="0 0 16 22" fill="none"><g stroke="#f6f6f6" stroke-width="1.5" stroke-linecap="round" stroke-linejoin="round"><rect x="0.9" y="2.6" width="14.2" height="18.4" rx="3"/><ellipse cx="8" cy="2.8" rx="2.7" ry="2" fill="#404040"/><path d="M4.3 10.5 L11.4 10.5 M4.3 13.9 L8.4 13.9"/></g></svg>
<svg style="position:absolute;left:28px;top:687px;" width="20" height="19" viewBox="0 0 20 19" fill="none"><g stroke="#f6f6f6" stroke-width="1.5" stroke-linecap="round" stroke-linejoin="round"><path d="M9 17.9 L3.8 17.9 Q0.8 17.9 0.8 14.9 L0.8 3.8 Q0.8 0.8 3.8 0.8 L15.6 0.8 Q18.6 0.8 18.6 3.8 L18.6 8.3"/><path d="M1 4.2 L3.8 4.2 M6.3 4.2 L18.4 4.2"/><path d="M3.7 9 L9 9 M3.7 12.9 L7 12.9" stroke-width="1.7"/><circle cx="14.4" cy="13.6" r="4.4"/><path d="M12.4 13.8 L13.8 15.2 L16.4 12.2"/></g></svg>
<svg style="position:absolute;left:29.3px;top:738px;" width="17.70" height="21.00" viewBox="0 0 17.7 21" fill="none"><g stroke="#f6f6f6" stroke-width="1.5" stroke-linecap="round" stroke-linejoin="round"><path d="M16.9 9.6 L16.9 4 Q16.9 0.8 13.7 0.8 L6.6 0.8 L0.8 6.6 L0.8 17 Q0.8 20.2 4 20.2 L10.8 20.2"/><path d="M6.6 0.9 L6.6 4.6 Q6.6 6.6 4.6 6.6 L0.9 6.6"/><path d="M5.6 9.8 L11.6 9.8 M5.6 13.4 L8.8 13.4"/></g><g transform="translate(14.6 15.9) scale(0.9555555555555555)" stroke="#f6f6f6" stroke-width="1.6482558139534886" stroke-linecap="round" fill="none"><path d="M2.2 -2 Q2 -3.1 0.3 -3.1 Q-2.1 -3.1 -2.1 -1.6 Q-2.1 -0.4 0 0 Q2.3 0.45 2.3 1.7 Q2.3 3.2 0 3.2 Q-2.1 3.2 -2.4 1.9"/><path d="M0 -4.5 L0 4.5"/></g></svg>
<svg style="position:absolute;left:27px;top:791px;" width="22" height="22" viewBox="0 0 22 22" fill="none"><g stroke="#f6f6f6" stroke-width="1.5" stroke-linecap="round" stroke-linejoin="round"><path d="M17 6.6 L17 19.6 Q15.6 20.8 14.3 19.6 Q12.9 18.4 11.6 19.6 Q10.2 20.8 8.9 19.6 Q7.5 18.4 6.2 19.6 Q4.8 20.8 3.5 19.6 Q2.1 18.4 0.8 19.6 L0.8 3.6 Q0.8 0.8 3.6 0.8 L19 0.8 Q21.2 0.8 21.2 3 L21.2 6.6 L17 6.6 L17 3 Q17 0.8 19 0.8"/><path d="M4.6 4.6 L13.4 4.6" stroke-width="1.8"/><path d="M4.6 8.1 L7 8.1"/></g><g transform="translate(11.4 13) scale(0.9555555555555555)" stroke="#f6f6f6" stroke-width="1.5697674418604652" stroke-linecap="round" fill="none"><path d="M2.2 -2 Q2 -3.1 0.3 -3.1 Q-2.1 -3.1 -2.1 -1.6 Q-2.1 -0.4 0 0 Q2.3 0.45 2.3 1.7 Q2.3 3.2 0 3.2 Q-2.1 3.2 -2.4 1.9"/><path d="M0 -4.5 L0 4.5"/></g></svg>
<svg style="position:absolute;left:28px;top:844px;" width="19" height="22" viewBox="0 0 19 22" fill="none"><g stroke="#f6f6f6" stroke-width="1.5" stroke-linecap="round" stroke-linejoin="round"><path d="M5.2 5 L3.8 5 Q0.8 5 0.8 8 L0.8 17.6 Q0.8 20.6 3.8 20.6 L10.2 20.6 Q13.2 20.6 13.2 17.6 L13.2 16.6"/><path d="M8.2 0.8 L12.6 0.8 L18.1 6.3 L18.1 13.5 Q18.1 16.4 15.2 16.4 L8.2 16.4 Q5.3 16.4 5.3 13.5 L5.3 3.7 Q5.3 0.8 8.2 0.8 Z"/><path d="M12.6 0.9 L12.6 4.3 Q12.6 6.3 14.6 6.3 L18 6.3"/><path d="M8.5 9.3 L11.2 9.3 M8.5 12.4 L15 12.4"/></g></svg>
<svg style="position:absolute;left:29px;top:897px;" width="18" height="22" viewBox="0 0 18 22" fill="none"><g stroke="#f6f6f6" stroke-width="1.5" stroke-linecap="round" stroke-linejoin="round"><rect x="0.9" y="0.8" width="15.9" height="20.4" rx="4.2"/><rect x="4.5" y="4.9" width="8.7" height="3.7" rx="1.8"/></g><g fill="#f6f6f6"><rect x="4.1" y="12" width="1.7" height="1.7"/><rect x="8.1" y="12" width="1.7" height="1.7"/><rect x="12.1" y="12" width="1.7" height="1.7"/><rect x="4.1" y="16.5" width="1.7" height="1.7"/><rect x="8.1" y="16.5" width="1.7" height="1.7"/><rect x="12.1" y="16.5" width="1.7" height="1.7"/></g></svg>
<svg style="position:absolute;left:29.3px;top:951px;" width="18" height="21" viewBox="0 0 18 21" fill="none"><g stroke="#f6f6f6" stroke-width="1.5" stroke-linecap="round" stroke-linejoin="round"><path d="M6.8 18.9 L4.3 18.9 Q0.8 18.9 0.8 15.4 L0.8 4.3 Q0.8 0.8 4.3 0.8 L11.7 0.8 Q15.2 0.8 15.2 4.3 L15.2 10"/><rect x="3.7" y="4" width="8.2" height="3.5" rx="1.75"/><path d="M3.8 10.5 L7.6 10.5 M3.8 13.3 L6.2 13.3" stroke-width="1.6"/><path d="M12.8 11.1 L16.9 13.4 L16.9 18 L12.8 20.3 L8.7 18 L8.7 13.4 Z" fill="#404040"/><path d="M8.9 13.5 L12.8 15.7 L16.7 13.5 M12.8 15.7 L12.8 20.1"/></g></svg>
<svg style="position:absolute;left:29.3px;top:1012px;" width="18" height="21" viewBox="0 0 18 21" fill="none"><g stroke="#f6f6f6" stroke-width="1.5" stroke-linecap="round" stroke-linejoin="round"><path d="M6.8 18.9 L4.3 18.9 Q0.8 18.9 0.8 15.4 L0.8 4.3 Q0.8 0.8 4.3 0.8 L11.7 0.8 Q15.2 0.8 15.2 4.3 L15.2 10"/><rect x="3.7" y="4" width="8.2" height="3.5" rx="1.75"/><path d="M3.8 10.5 L7.6 10.5 M3.8 13.3 L6.2 13.3" stroke-width="1.6"/><path d="M9.3 14.3 A4.2 4.2 0 1 1 10 19.2"/><path d="M12.9 14.2 L12.9 16.7 L14.3 18.2"/></g><path d="M7.4 13.9 L11.1 13.9 L9.2 16.6 Z" fill="#f6f6f6"/></svg>
<div style="position:absolute;left:0px;top:1031px;width:1919px;height:3px;background:#e7eaf5;"></div>
<div style="position:absolute;left:0px;top:1031px;width:1919px;height:1px;background:#b9bbc2;"></div>
<svg style="position:absolute;left:1546px;top:79px;" width="24" height="26" viewBox="0 0 24 26" fill="none"><g stroke="#333" stroke-width="1.5" stroke-linecap="round" stroke-linejoin="round"><path d="M12 2.5 C7.6 2.5 5.2 5.8 5.2 9.8 C5.2 13.6 3.4 15 2.8 16.6 C2.4 17.9 3.2 18.6 4.4 18.6 L19.6 18.6 C20.8 18.6 21.6 17.9 21.2 16.6 C20.6 15 18.8 13.6 18.8 9.8 C18.8 5.8 16.4 2.5 12 2.5 Z"/><path d="M8.6 20.6 A3.5 3.5 0 0 0 15.4 20.6"/></g></svg>
<div style="position:absolute;left:1557px;top:75px;width:16px;height:16px;background:#0bbe30;border-radius:50%;"></div>
<span class="t" style="left:1561px;top:77px;font-size:11px;line-height:11px;letter-spacing:0.000px;color:#fff;transform:translate(0.97px,0.69px) scaleX(1.0001);font-weight:bold;">1</span>
<svg style="position:absolute;left:1600px;top:80px;" width="20" height="24" viewBox="0 0 20 24" fill="none"><g stroke="#333" stroke-width="1.5" stroke-linecap="round" stroke-linejoin="round"><circle cx="9.9" cy="6.3" r="4.5"/><ellipse cx="9.9" cy="18.2" rx="8.1" ry="3.8"/></g></svg>
<svg style="position:absolute;left:1652px;top:81px;" width="22" height="22" viewBox="0 0 22 22" fill="none"><circle cx="11" cy="10.9" r="10" stroke="#333" stroke-width="1.4" stroke-linecap="round" stroke-linejoin="round"/></svg>
<span class="t" style="left:1659px;top:85px;font-size:14px;line-height:14px;letter-spacing:0.000px;color:#333;transform:translate(0.58px,0.35px) scaleX(1.0001);">?</span>
<svg style="position:absolute;left:1445px;top:173px;" width="24" height="24" viewBox="0 0 24 24" fill="none"><g stroke="#9c9c9c" stroke-width="1.6" stroke-linecap="round" stroke-linejoin="round"><circle cx="11.6" cy="11.2" r="9.4"/><path d="M18.6 18.4 L21.2 21"/></g></svg>
<svg style="position:absolute;left:1502px;top:175px;" width="18" height="18" viewBox="0 0 18 18" fill="none"><path d="M1.2 1.2 L16.6 16.6 M16.6 1.2 L1.2 16.6" stroke="#333" stroke-width="1.5" stroke-linecap="round" stroke-linejoin="round"/></svg>
<svg style="position:absolute;left:1427px;top:247px;" width="16" height="16" viewBox="0 0 16 16" fill="none"><g stroke="#333" stroke-width="1.4" stroke-linecap="round" stroke-linejoin="round"><path d="M8 1.2 L8 11.6 M3.6 5.5 L8 1.1 L12.4 5.5"/><path d="M0.8 10.6 L0.8 12.6 Q0.8 15 3.2 15 L12.8 15 Q15.2 15 15.2 12.6 L15.2 10.6"/></g></svg>
<svg style="position:absolute;left:1463px;top:248px;" width="16" height="13" viewBox="0 0 16 13" fill="none"><g stroke="#333" stroke-width="1.3" stroke-linecap="round" stroke-linejoin="round"><path d="M0.8 6.5 Q3.8 1.3 8 1.3 Q12.2 1.3 15.2 6.5 Q12.2 11.7 8 11.7 Q3.8 11.7 0.8 6.5 Z"/><circle cx="8" cy="6.5" r="2.8"/></g><circle cx="8" cy="6.5" r="1" fill="#333"/></svg>
<svg style="position:absolute;left:1570px;top:332px;" width="16" height="17" viewBox="0 0 16 17" fill="none"><g transform="translate(6.5 6.5) rotate(45)" stroke="#333" stroke-width="1.2" stroke-linecap="round" stroke-linejoin="round"><rect x="-2.9" y="-5.6" width="5.8" height="11.2"/><path d="M-3.7 -5.6 L3.7 -5.6 M-3.7 5.6 L3.7 5.6"/><path d="M2.9 -1.2 L11 -1.2 A1.2 1.2 0 0 1 11 1.2 L2.9 1.2"/></g><path d="M0.3 15.9 L8 15.9" stroke="#333" stroke-width="1.2" stroke-linecap="round" stroke-linejoin="round"/></svg>
<svg style="position:absolute;left:1600px;top:332px;" width="17" height="17" viewBox="0 0 17 17" fill="none"><g stroke="#333" stroke-width="1.2" stroke-linecap="round" stroke-linejoin="round"><path d="M1 8.9 A7.2 7.2 0 1 0 2.5 3.7"/><path d="M1.5 1.3 L1.8 4.5 L5 4.4"/><path d="M8.2 5.2 L8.2 8.6 L11 11.3"/></g></svg>
<svg style="position:absolute;left:1631.2px;top:332.4px;" width="12.57" height="14.91" viewBox="0 0 17.7 21" fill="none"><g stroke="#333" stroke-width="1.55" stroke-linecap="round" stroke-linejoin="round"><path d="M16.9 9.6 L16.9 4 Q16.9 0.8 13.7 0.8 L6.6 0.8 L0.8 6.6 L0.8 17 Q0.8 20.2 4 20.2 L10.8 20.2"/><path d="M6.6 0.9 L6.6 4.6 Q6.6 6.6 4.6 6.6 L0.9 6.6"/><path d="M5.6 9.8 L11.6 9.8 M5.6 13.4 L8.8 13.4"/></g><g transform="translate(14.6 15.9) scale(0.9555555555555555)" stroke="#333" stroke-width="1.703197674418605" stroke-linecap="round" fill="none"><path d="M2.2 -2 Q2 -3.1 0.3 -3.1 Q-2.1 -3.1 -2.1 -1.6 Q-2.1 -0.4 0 0 Q2.3 0.45 2.3 1.7 Q2.3 3.2 0 3.2 Q-2.1 3.2 -2.4 1.9"/><path d="M0 -4.5 L0 4.5"/></g></svg>
<svg style="position:absolute;left:1570px;top:380px;" width="16" height="17" viewBox="0 0 16 17" fill="none"><g transform="translate(6.5 6.5) rotate(45)" stroke="#333" stroke-width="1.2" stroke-linecap="round" stroke-linejoin="round"><rect x="-2.9" y="-5.6" width="5.8" height="11.2"/><path d="M-3.7 -5.6 L3.7 -5.6 M-3.7 5.6 L3.7 5.6"/><path d="M2.9 -1.2 L11 -1.2 A1.2 1.2 0 0 1 11 1.2 L2.9 1.2"/></g><path d="M0.3 15.9 L8 15.9" stroke="#333" stroke-width="1.2" stroke-linecap="round" stroke-linejoin="round"/></svg>
<svg style="position:absolute;left:1600px;top:380px;" width="17" height="17" viewBox="0 0 17 17" fill="none"><g stroke="#333" stroke-width="1.2" stroke-linecap="round" stroke-linejoin="round"><path d="M1 8.9 A7.2 7.2 0 1 0 2.5 3.7"/><path d="M1.5 1.3 L1.8 4.5 L5 4.4"/><path d="M8.2 5.2 L8.2 8.6 L11 11.3"/></g></svg>
<svg style="position:absolute;left:1631.2px;top:380.4px;" width="12.57" height="14.91" viewBox="0 0 17.7 21" fill="none"><g stroke="#333" stroke-width="1.55" stroke-linecap="round" stroke-linejoin="round"><path d="M16.9 9.6 L16.9 4 Q16.9 0.8 13.7 0.8 L6.6 0.8 L0.8 6.6 L0.8 17 Q0.8 20.2 4 20.2 L10.8 20.2"/><path d="M6.6 0.9 L6.6 4.6 Q6.6 6.6 4.6 6.6 L0.9 6.6"/><path d="M5.6 9.8 L11.6 9.8 M5.6 13.4 L8.8 13.4"/></g><g transform="translate(14.6 15.9) scale(0.9555555555555555)" stroke="#333" stroke-width="1.703197674418605" stroke-linecap="round" fill="none"><path d="M2.2 -2 Q2 -3.1 0.3 -3.1 Q-2.1 -3.1 -2.1 -1.6 Q-2.1 -0.4 0 0 Q2.3 0.45 2.3 1.7 Q2.3 3.2 0 3.2 Q-2.1 3.2 -2.4 1.9"/><path d="M0 -4.5 L0 4.5"/></g></svg>
<svg style="position:absolute;left:1570px;top:428px;" width="16" height="17" viewBox="0 0 16 17" fill="none"><g transform="translate(6.5 6.5) rotate(45)" stroke="#333" stroke-width="1.2" stroke-linecap="round" stroke-linejoin="round"><rect x="-2.9" y="-5.6" width="5.8" height="11.2"/><path d="M-3.7 -5.6 L3.7 -5.6 M-3.7 5.6 L3.7 5.6"/><path d="M2.9 -1.2 L11 -1.2 A1.2 1.2 0 0 1 11 1.2 L2.9 1.2"/></g><path d="M0.3 15.9 L8 15.9" stroke="#333" stroke-width="1.2" stroke-linecap="round" stroke-linejoin="round"/></svg>
<svg style="position:absolute;left:1600px;top:428px;" width="17" height="17" viewBox="0 0 17 17" fill="none"><g stroke="#333" stroke-width="1.2" stroke-linecap="round" stroke-linejoin="round"><path d="M1 8.9 A7.2 7.2 0 1 0 2.5 3.7"/><path d="M1.5 1.3 L1.8 4.5 L5 4.4"/><path d="M8.2 5.2 L8.2 8.6 L11 11.3"/></g></svg>
<svg style="position:absolute;left:1631.2px;top:428.4px;" width="12.57" height="14.91" viewBox="0 0 17.7 21" fill="none"><g stroke="#333" stroke-width="1.55" stroke-linecap="round" stroke-linejoin="round"><path d="M16.9 9.6 L16.9 4 Q16.9 0.8 13.7 0.8 L6.6 0.8 L0.8 6.6 L0.8 17 Q0.8 20.2 4 20.2 L10.8 20.2"/><path d="M6.6 0.9 L6.6 4.6 Q6.6 6.6 4.6 6.6 L0.9 6.6"/><path d="M5.6 9.8 L11.6 9.8 M5.6 13.4 L8.8 13.4"/></g><g transform="translate(14.6 15.9) scale(0.9555555555555555)" stroke="#333" stroke-width="1.703197674418605" stroke-linecap="round" fill="none"><path d="M2.2 -2 Q2 -3.1 0.3 -3.1 Q-2.1 -3.1 -2.1 -1.6 Q-2.1 -0.4 0 0 Q2.3 0.45 2.3 1.7 Q2.3 3.2 0 3.2 Q-2.1 3.2 -2.4 1.9"/><path d="M0 -4.5 L0 4.5"/></g></svg>
<svg style="position:absolute;left:1570px;top:476px;" width="16" height="17" viewBox="0 0 16 17" fill="none"><g transform="translate(6.5 6.5) rotate(45)" stroke="#333" stroke-width="1.2" stroke-linecap="round" stroke-linejoin="round"><rect x="-2.9" y="-5.6" width="5.8" height="11.2"/><path d="M-3.7 -5.6 L3.7 -5.6 M-3.7 5.6 L3.7 5.6"/><path d="M2.9 -1.2 L11 -1.2 A1.2 1.2 0 0 1 11 1.2 L2.9 1.2"/></g><path d="M0.3 15.9 L8 15.9" stroke="#333" stroke-width="1.2" stroke-linecap="round" stroke-linejoin="round"/></svg>
<svg style="position:absolute;left:1600px;top:476px;" width="17" height="17" viewBox="0 0 17 17" fill="none"><g stroke="#333" stroke-width="1.2" stroke-linecap="round" stroke-linejoin="round"><path d="M1 8.9 A7.2 7.2 0 1 0 2.5 3.7"/><path d="M1.5 1.3 L1.8 4.5 L5 4.4"/><path d="M8.2 5.2 L8.2 8.6 L11 11.3"/></g></svg>
<svg style="position:absolute;left:1631.2px;top:476.4px;" width="12.57" height="14.91" viewBox="0 0 17.7 21" fill="none"><g stroke="#333" stroke-width="1.55" stroke-linecap="round" stroke-linejoin="round"><path d="M16.9 9.6 L16.9 4 Q16.9 0.8 13.7 0.8 L6.6 0.8 L0.8 6.6 L0.8 17 Q0.8 20.2 4 20.2 L10.8 20.2"/><path d="M6.6 0.9 L6.6 4.6 Q6.6 6.6 4.6 6.6 L0.9 6.6"/><path d="M5.6 9.8 L11.6 9.8 M5.6 13.4 L8.8 13.4"/></g><g transform="translate(14.6 15.9) scale(0.9555555555555555)" stroke="#333" stroke-width="1.703197674418605" stroke-linecap="round" fill="none"><path d="M2.2 -2 Q2 -3.1 0.3 -3.1 Q-2.1 -3.1 -2.1 -1.6 Q-2.1 -0.4 0 0 Q2.3 0.45 2.3 1.7 Q2.3 3.2 0 3.2 Q-2.1 3.2 -2.4 1.9"/><path d="M0 -4.5 L0 4.5"/></g></svg>
<svg style="position:absolute;left:1570px;top:524px;" width="16" height="17" viewBox="0 0 16 17" fill="none"><g transform="translate(6.5 6.5) rotate(45)" stroke="#333" stroke-width="1.2" stroke-linecap="round" stroke-linejoin="round"><rect x="-2.9" y="-5.6" width="5.8" height="11.2"/><path d="M-3.7 -5.6 L3.7 -5.6 M-3.7 5.6 L3.7 5.6"/><path d="M2.9 -1.2 L11 -1.2 A1.2 1.2 0 0 1 11 1.2 L2.9 1.2"/></g><path d="M0.3 15.9 L8 15.9" stroke="#333" stroke-width="1.2" stroke-linecap="round" stroke-linejoin="round"/></svg>
<svg style="position:absolute;left:1600px;top:524px;" width="17" height="17" viewBox="0 0 17 17" fill="none"><g stroke="#333" stroke-width="1.2" stroke-linecap="round" stroke-linejoin="round"><path d="M1 8.9 A7.2 7.2 0 1 0 2.5 3.7"/><path d="M1.5 1.3 L1.8 4.5 L5 4.4"/><path d="M8.2 5.2 L8.2 8.6 L11 11.3"/></g></svg>
<svg style="position:absolute;left:1631.2px;top:524.4px;" width="12.57" height="14.91" viewBox="0 0 17.7 21" fill="none"><g stroke="#333" stroke-width="1.55" stroke-linecap="round" stroke-linejoin="round"><path d="M16.9 9.6 L16.9 4 Q16.9 0.8 13.7 0.8 L6.6 0.8 L0.8 6.6 L0.8 17 Q0.8 20.2 4 20.2 L10.8 20.2"/><path d="M6.6 0.9 L6.6 4.6 Q6.6 6.6 4.6 6.6 L0.9 6.6"/><path d="M5.6 9.8 L11.6 9.8 M5.6 13.4 L8.8 13.4"/></g><g transform="translate(14.6 15.9) scale(0.9555555555555555)" stroke="#333" stroke-width="1.703197674418605" stroke-linecap="round" fill="none"><path d="M2.2 -2 Q2 -3.1 0.3 -3.1 Q-2.1 -3.1 -2.1 -1.6 Q-2.1 -0.4 0 0 Q2.3 0.45 2.3 1.7 Q2.3 3.2 0 3.2 Q-2.1 3.2 -2.4 1.9"/><path d="M0 -4.5 L0 4.5"/></g></svg>
<svg style="position:absolute;left:1570px;top:572px;" width="16" height="17" viewBox="0 0 16 17" fill="none"><g transform="translate(6.5 6.5) rotate(45)" stroke="#333" stroke-width="1.2" stroke-linecap="round" stroke-linejoin="round"><rect x="-2.9" y="-5.6" width="5.8" height="11.2"/><path d="M-3.7 -5.6 L3.7 -5.6 M-3.7 5.6 L3.7 5.6"/><path d="M2.9 -1.2 L11 -1.2 A1.2 1.2 0 0 1 11 1.2 L2.9 1.2"/></g><path d="M0.3 15.9 L8 15.9" stroke="#333" stroke-width="1.2" stroke-linecap="round" stroke-linejoin="round"/></svg>
<svg style="position:absolute;left:1600px;top:572px;" width="17" height="17" viewBox="0 0 17 17" fill="none"><g stroke="#333" stroke-width="1.2" stroke-linecap="round" stroke-linejoin="round"><path d="M1 8.9 A7.2 7.2 0 1 0 2.5 3.7"/><path d="M1.5 1.3 L1.8 4.5 L5 4.4"/><path d="M8.2 5.2 L8.2 8.6 L11 11.3"/></g></svg>
<svg style="position:absolute;left:1631.2px;top:572.4px;" width="12.57" height="14.91" viewBox="0 0 17.7 21" fill="none"><g stroke="#333" stroke-width="1.55" stroke-linecap="round" stroke-linejoin="round"><path d="M16.9 9.6 L16.9 4 Q16.9 0.8 13.7 0.8 L6.6 0.8 L0.8 6.6 L0.8 17 Q0.8 20.2 4 20.2 L10.8 20.2"/><path d="M6.6 0.9 L6.6 4.6 Q6.6 6.6 4.6 6.6 L0.9 6.6"/><path d="M5.6 9.8 L11.6 9.8 M5.6 13.4 L8.8 13.4"/></g><g transform="translate(14.6 15.9) scale(0.9555555555555555)" stroke="#333" stroke-width="1.703197674418605" stroke-linecap="round" fill="none"><path d="M2.2 -2 Q2 -3.1 0.3 -3.1 Q-2.1 -3.1 -2.1 -1.6 Q-2.1 -0.4 0 0 Q2.3 0.45 2.3 1.7 Q2.3 3.2 0 3.2 Q-2.1 3.2 -2.4 1.9"/><path d="M0 -4.5 L0 4.5"/></g></svg>
<svg style="position:absolute;left:1570px;top:620px;" width="16" height="17" viewBox="0 0 16 17" fill="none"><g transform="translate(6.5 6.5) rotate(45)" stroke="#333" stroke-width="1.2" stroke-linecap="round" stroke-linejoin="round"><rect x="-2.9" y="-5.6" width="5.8" height="11.2"/><path d="M-3.7 -5.6 L3.7 -5.6 M-3.7 5.6 L3.7 5.6"/><path d="M2.9 -1.2 L11 -1.2 A1.2 1.2 0 0 1 11 1.2 L2.9 1.2"/></g><path d="M0.3 15.9 L8 15.9" stroke="#333" stroke-width="1.2" stroke-linecap="round" stroke-linejoin="round"/></svg>
<svg style="position:absolute;left:1600px;top:620px;" width="17" height="17" viewBox="0 0 17 17" fill="none"><g stroke="#333" stroke-width="1.2" stroke-linecap="round" stroke-linejoin="round"><path d="M1 8.9 A7.2 7.2 0 1 0 2.5 3.7"/><path d="M1.5 1.3 L1.8 4.5 L5 4.4"/><path d="M8.2 5.2 L8.2 8.6 L11 11.3"/></g></svg>
<svg style="position:absolute;left:1631.2px;top:620.4px;" width="12.57" height="14.91" viewBox="0 0 17.7 21" fill="none"><g stroke="#333" stroke-width="1.55" stroke-linecap="round" stroke-linejoin="round"><path d="M16.9 9.6 L16.9 4 Q16.9 0.8 13.7 0.8 L6.6 0.8 L0.8 6.6 L0.8 17 Q0.8 20.2 4 20.2 L10.8 20.2"/><path d="M6.6 0.9 L6.6 4.6 Q6.6 6.6 4.6 6.6 L0.9 6.6"/><path d="M5.6 9.8 L11.6 9.8 M5.6 13.4 L8.8 13.4"/></g><g transform="translate(14.6 15.9) scale(0.9555555555555555)" stroke="#333" stroke-width="1.703197674418605" stroke-linecap="round" fill="none"><path d="M2.2 -2 Q2 -3.1 0.3 -3.1 Q-2.1 -3.1 -2.1 -1.6 Q-2.1 -0.4 0 0 Q2.3 0.45 2.3 1.7 Q2.3 3.2 0 3.2 Q-2.1 3.2 -2.4 1.9"/><path d="M0 -4.5 L0 4.5"/></g></svg>
<svg style="position:absolute;left:1570px;top:668px;" width="16" height="17" viewBox="0 0 16 17" fill="none"><g transform="translate(6.5 6.5) rotate(45)" stroke="#333" stroke-width="1.2" stroke-linecap="round" stroke-linejoin="round"><rect x="-2.9" y="-5.6" width="5.8" height="11.2"/><path d="M-3.7 -5.6 L3.7 -5.6 M-3.7 5.6 L3.7 5.6"/><path d="M2.9 -1.2 L11 -1.2 A1.2 1.2 0 0 1 11 1.2 L2.9 1.2"/></g><path d="M0.3 15.9 L8 15.9" stroke="#333" stroke-width="1.2" stroke-linecap="round" stroke-linejoin="round"/></svg>
<svg style="position:absolute;left:1600px;top:668px;" width="17" height="17" viewBox="0 0 17 17" fill="none"><g stroke="#333" stroke-width="1.2" stroke-linecap="round" stroke-linejoin="round"><path d="M1 8.9 A7.2 7.2 0 1 0 2.5 3.7"/><path d="M1.5 1.3 L1.8 4.5 L5 4.4"/><path d="M8.2 5.2 L8.2 8.6 L11 11.3"/></g></svg>
<svg style="position:absolute;left:1631.2px;top:668.4px;" width="12.57" height="14.91" viewBox="0 0 17.7 21" fill="none"><g stroke="#333" stroke-width="1.55" stroke-linecap="round" stroke-linejoin="round"><path d="M16.9 9.6 L16.9 4 Q16.9 0.8 13.7 0.8 L6.6 0.8 L0.8 6.6 L0.8 17 Q0.8 20.2 4 20.2 L10.8 20.2"/><path d="M6.6 0.9 L6.6 4.6 Q6.6 6.6 4.6 6.6 L0.9 6.6"/><path d="M5.6 9.8 L11.6 9.8 M5.6 13.4 L8.8 13.4"/></g><g transform="translate(14.6 15.9) scale(0.9555555555555555)" stroke="#333" stroke-width="1.703197674418605" stroke-linecap="round" fill="none"><path d="M2.2 -2 Q2 -3.1 0.3 -3.1 Q-2.1 -3.1 -2.1 -1.6 Q-2.1 -0.4 0 0 Q2.3 0.45 2.3 1.7 Q2.3 3.2 0 3.2 Q-2.1 3.2 -2.4 1.9"/><path d="M0 -4.5 L0 4.5"/></g></svg>
<svg style="position:absolute;left:1570px;top:716px;" width="16" height="17" viewBox="0 0 16 17" fill="none"><g transform="translate(6.5 6.5) rotate(45)" stroke="#333" stroke-width="1.2" stroke-linecap="round" stroke-linejoin="round"><rect x="-2.9" y="-5.6" width="5.8" height="11.2"/><path d="M-3.7 -5.6 L3.7 -5.6 M-3.7 5.6 L3.7 5.6"/><path d="M2.9 -1.2 L11 -1.2 A1.2 1.2 0 0 1 11 1.2 L2.9 1.2"/></g><path d="M0.3 15.9 L8 15.9" stroke="#333" stroke-width="1.2" stroke-linecap="round" stroke-linejoin="round"/></svg>
<svg style="position:absolute;left:1600px;top:716px;" width="17" height="17" viewBox="0 0 17 17" fill="none"><g stroke="#333" stroke-width="1.2" stroke-linecap="round" stroke-linejoin="round"><path d="M1 8.9 A7.2 7.2 0 1 0 2.5 3.7"/><path d="M1.5 1.3 L1.8 4.5 L5 4.4"/><path d="M8.2 5.2 L8.2 8.6 L11 11.3"/></g></svg>
<svg style="position:absolute;left:1631.2px;top:716.4px;" width="12.57" height="14.91" viewBox="0 0 17.7 21" fill="none"><g stroke="#333" stroke-width="1.55" stroke-linecap="round" stroke-linejoin="round"><path d="M16.9 9.6 L16.9 4 Q16.9 0.8 13.7 0.8 L6.6 0.8 L0.8 6.6 L0.8 17 Q0.8 20.2 4 20.2 L10.8 20.2"/><path d="M6.6 0.9 L6.6 4.6 Q6.6 6.6 4.6 6.6 L0.9 6.6"/><path d="M5.6 9.8 L11.6 9.8 M5.6 13.4 L8.8 13.4"/></g><g transform="translate(14.6 15.9) scale(0.9555555555555555)" stroke="#333" stroke-width="1.703197674418605" stroke-linecap="round" fill="none"><path d="M2.2 -2 Q2 -3.1 0.3 -3.1 Q-2.1 -3.1 -2.1 -1.6 Q-2.1 -0.4 0 0 Q2.3 0.45 2.3 1.7 Q2.3 3.2 0 3.2 Q-2.1 3.2 -2.4 1.9"/><path d="M0 -4.5 L0 4.5"/></g></svg>
<svg style="position:absolute;left:1570px;top:764px;" width="16" height="17" viewBox="0 0 16 17" fill="none"><g transform="translate(6.5 6.5) rotate(45)" stroke="#333" stroke-width="1.2" stroke-linecap="round" stroke-linejoin="round"><rect x="-2.9" y="-5.6" width="5.8" height="11.2"/><path d="M-3.7 -5.6 L3.7 -5.6 M-3.7 5.6 L3.7 5.6"/><path d="M2.9 -1.2 L11 -1.2 A1.2 1.2 0 0 1 11 1.2 L2.9 1.2"/></g><path d="M0.3 15.9 L8 15.9" stroke="#333" stroke-width="1.2" stroke-linecap="round" stroke-linejoin="round"/></svg>
<svg style="position:absolute;left:1600px;top:764px;" width="17" height="17" viewBox="0 0 17 17" fill="none"><g stroke="#333" stroke-width="1.2" stroke-linecap="round" stroke-linejoin="round"><path d="M1 8.9 A7.2 7.2 0 1 0 2.5 3.7"/><path d="M1.5 1.3 L1.8 4.5 L5 4.4"/><path d="M8.2 5.2 L8.2 8.6 L11 11.3"/></g></svg>
<svg style="position:absolute;left:1631.2px;top:764.4px;" width="12.57" height="14.91" viewBox="0 0 17.7 21" fill="none"><g stroke="#333" stroke-width="1.55" stroke-linecap="round" stroke-linejoin="round"><path d="M16.9 9.6 L16.9 4 Q16.9 0.8 13.7 0.8 L6.6 0.8 L0.8 6.6 L0.8 17 Q0.8 20.2 4 20.2 L10.8 20.2"/><path d="M6.6 0.9 L6.6 4.6 Q6.6 6.6 4.6 6.6 L0.9 6.6"/><path d="M5.6 9.8 L11.6 9.8 M5.6 13.4 L8.8 13.4"/></g><g transform="translate(14.6 15.9) scale(0.9555555555555555)" stroke="#333" stroke-width="1.703197674418605" stroke-linecap="round" fill="none"><path d="M2.2 -2 Q2 -3.1 0.3 -3.1 Q-2.1 -3.1 -2.1 -1.6 Q-2.1 -0.4 0 0 Q2.3 0.45 2.3 1.7 Q2.3 3.2 0 3.2 Q-2.1 3.2 -2.4 1.9"/><path d="M0 -4.5 L0 4.5"/></g></svg>
<svg style="position:absolute;left:1570px;top:812px;" width="16" height="17" viewBox="0 0 16 17" fill="none"><g transform="translate(6.5 6.5) rotate(45)" stroke="#333" stroke-width="1.2" stroke-linecap="round" stroke-linejoin="round"><rect x="-2.9" y="-5.6" width="5.8" height="11.2"/><path d="M-3.7 -5.6 L3.7 -5.6 M-3.7 5.6 L3.7 5.6"/><path d="M2.9 -1.2 L11 -1.2 A1.2 1.2 0 0 1 11 1.2 L2.9 1.2"/></g><path d="M0.3 15.9 L8 15.9" stroke="#333" stroke-width="1.2" stroke-linecap="round" stroke-linejoin="round"/></svg>
<svg style="position:absolute;left:1600px;top:812px;" width="17" height="17" viewBox="0 0 17 17" fill="none"><g stroke="#333" stroke-width="1.2" stroke-linecap="round" stroke-linejoin="round"><path d="M1 8.9 A7.2 7.2 0 1 0 2.5 3.7"/><path d="M1.5 1.3 L1.8 4.5 L5 4.4"/><path d="M8.2 5.2 L8.2 8.6 L11 11.3"/></g></svg>
<svg style="position:absolute;left:1631.2px;top:812.4px;" width="12.57" height="14.91" viewBox="0 0 17.7 21" fill="none"><g stroke="#333" stroke-width="1.55" stroke-linecap="round" stroke-linejoin="round"><path d="M16.9 9.6 L16.9 4 Q16.9 0.8 13.7 0.8 L6.6 0.8 L0.8 6.6 L0.8 17 Q0.8 20.2 4 20.2 L10.8 20.2"/><path d="M6.6 0.9 L6.6 4.6 Q6.6 6.6 4.6 6.6 L0.9 6.6"/><path d="M5.6 9.8 L11.6 9.8 M5.6 13.4 L8.8 13.4"/></g><g transform="translate(14.6 15.9) scale(0.9555555555555555)" stroke="#333" stroke-width="1.703197674418605" stroke-linecap="round" fill="none"><path d="M2.2 -2 Q2 -3.1 0.3 -3.1 Q-2.1 -3.1 -2.1 -1.6 Q-2.1 -0.4 0 0 Q2.3 0.45 2.3 1.7 Q2.3 3.2 0 3.2 Q-2.1 3.2 -2.4 1.9"/><path d="M0 -4.5 L0 4.5"/></g></svg>
<svg style="position:absolute;left:1570px;top:860px;" width="16" height="17" viewBox="0 0 16 17" fill="none"><g transform="translate(6.5 6.5) rotate(45)" stroke="#333" stroke-width="1.2" stroke-linecap="round" stroke-linejoin="round"><rect x="-2.9" y="-5.6" width="5.8" height="11.2"/><path d="M-3.7 -5.6 L3.7 -5.6 M-3.7 5.6 L3.7 5.6"/><path d="M2.9 -1.2 L11 -1.2 A1.2 1.2 0 0 1 11 1.2 L2.9 1.2"/></g><path d="M0.3 15.9 L8 15.9" stroke="#333" stroke-width="1.2" stroke-linecap="round" stroke-linejoin="round"/></svg>
<svg style="position:absolute;left:1600px;top:860px;" width="17" height="17" viewBox="0 0 17 17" fill="none"><g stroke="#333" stroke-width="1.2" stroke-linecap="round" stroke-linejoin="round"><path d="M1 8.9 A7.2 7.2 0 1 0 2.5 3.7"/><path d="M1.5 1.3 L1.8 4.5 L5 4.4"/><path d="M8.2 5.2 L8.2 8.6 L11 11.3"/></g></svg>
<svg style="position:absolute;left:1631.2px;top:860.4px;" width="12.57" height="14.91" viewBox="0 0 17.7 21" fill="none"><g stroke="#333" stroke-width="1.55" stroke-linecap="round" stroke-linejoin="round"><path d="M16.9 9.6 L16.9 4 Q16.9 0.8 13.7 0.8 L6.6 0.8 L0.8 6.6 L0.8 17 Q0.8 20.2 4 20.2 L10.8 20.2"/><path d="M6.6 0.9 L6.6 4.6 Q6.6 6.6 4.6 6.6 L0.9 6.6"/><path d="M5.6 9.8 L11.6 9.8 M5.6 13.4 L8.8 13.4"/></g><g transform="translate(14.6 15.9) scale(0.9555555555555555)" stroke="#333" stroke-width="1.703197674418605" stroke-linecap="round" fill="none"><path d="M2.2 -2 Q2 -3.1 0.3 -3.1 Q-2.1 -3.1 -2.1 -1.6 Q-2.1 -0.4 0 0 Q2.3 0.45 2.3 1.7 Q2.3 3.2 0 3.2 Q-2.1 3.2 -2.4 1.9"/><path d="M0 -4.5 L0 4.5"/></g></svg>
<svg style="position:absolute;left:1570px;top:908px;" width="16" height="17" viewBox="0 0 16 17" fill="none"><g transform="translate(6.5 6.5) rotate(45)" stroke="#333" stroke-width="1.2" stroke-linecap="round" stroke-linejoin="round"><rect x="-2.9" y="-5.6" width="5.8" height="11.2"/><path d="M-3.7 -5.6 L3.7 -5.6 M-3.7 5.6 L3.7 5.6"/><path d="M2.9 -1.2 L11 -1.2 A1.2 1.2 0 0 1 11 1.2 L2.9 1.2"/></g><path d="M0.3 15.9 L8 15.9" stroke="#333" stroke-width="1.2" stroke-linecap="round" stroke-linejoin="round"/></svg>
<svg style="position:absolute;left:1600px;top:908px;" width="17" height="17" viewBox="0 0 17 17" fill="none"><g stroke="#333" stroke-width="1.2" stroke-linecap="round" stroke-linejoin="round"><path d="M1 8.9 A7.2 7.2 0 1 0 2.5 3.7"/><path d="M1.5 1.3 L1.8 4.5 L5 4.4"/><path d="M8.2 5.2 L8.2 8.6 L11 11.3"/></g></svg>
<svg style="position:absolute;left:1631.2px;top:908.4px;" width="12.57" height="14.91" viewBox="0 0 17.7 21" fill="none"><g stroke="#333" stroke-width="1.55" stroke-linecap="round" stroke-linejoin="round"><path d="M16.9 9.6 L16.9 4 Q16.9 0.8 13.7 0.8 L6.6 0.8 L0.8 6.6 L0.8 17 Q0.8 20.2 4 20.2 L10.8 20.2"/><path d="M6.6 0.9 L6.6 4.6 Q6.6 6.6 4.6 6.6 L0.9 6.6"/><path d="M5.6 9.8 L11.6 9.8 M5.6 13.4 L8.8 13.4"/></g><g transform="translate(14.6 15.9) scale(0.9555555555555555)" stroke="#333" stroke-width="1.703197674418605" stroke-linecap="round" fill="none"><path d="M2.2 -2 Q2 -3.1 0.3 -3.1 Q-2.1 -3.1 -2.1 -1.6 Q-2.1 -0.4 0 0 Q2.3 0.45 2.3 1.7 Q2.3 3.2 0 3.2 Q-2.1 3.2 -2.4 1.9"/><path d="M0 -4.5 L0 4.5"/></g></svg>
<svg style="position:absolute;left:1570px;top:956px;" width="16" height="17" viewBox="0 0 16 17" fill="none"><g transform="translate(6.5 6.5) rotate(45)" stroke="#333" stroke-width="1.2" stroke-linecap="round" stroke-linejoin="round"><rect x="-2.9" y="-5.6" width="5.8" height="11.2"/><path d="M-3.7 -5.6 L3.7 -5.6 M-3.7 5.6 L3.7 5.6"/><path d="M2.9 -1.2 L11 -1.2 A1.2 1.2 0 0 1 11 1.2 L2.9 1.2"/></g><path d="M0.3 15.9 L8 15.9" stroke="#333" stroke-width="1.2" stroke-linecap="round" stroke-linejoin="round"/></svg>
<svg style="position:absolute;left:1600px;top:956px;" width="17" height="17" viewBox="0 0 17 17" fill="none"><g stroke="#333" stroke-width="1.2" stroke-linecap="round" stroke-linejoin="round"><path d="M1 8.9 A7.2 7.2 0 1 0 2.5 3.7"/><path d="M1.5 1.3 L1.8 4.5 L5 4.4"/><path d="M8.2 5.2 L8.2 8.6 L11 11.3"/></g></svg>
<svg style="position:absolute;left:1631.2px;top:956.4px;" width="12.57" height="14.91" viewBox="0 0 17.7 21" fill="none"><g stroke="#333" stroke-width="1.55" stroke-linecap="round" stroke-linejoin="round"><path d="M16.9 9.6 L16.9 4 Q16.9 0.8 13.7 0.8 L6.6 0.8 L0.8 6.6 L0.8 17 Q0.8 20.2 4 20.2 L10.8 20.2"/><path d="M6.6 0.9 L6.6 4.6 Q6.6 6.6 4.6 6.6 L0.9 6.6"/><path d="M5.6 9.8 L11.6 9.8 M5.6 13.4 L8.8 13.4"/></g><g transform="translate(14.6 15.9) scale(0.9555555555555555)" stroke="#333" stroke-width="1.703197674418605" stroke-linecap="round" fill="none"><path d="M2.2 -2 Q2 -3.1 0.3 -3.1 Q-2.1 -3.1 -2.1 -1.6 Q-2.1 -0.4 0 0 Q2.3 0.45 2.3 1.7 Q2.3 3.2 0 3.2 Q-2.1 3.2 -2.4 1.9"/><path d="M0 -4.5 L0 4.5"/></g></svg>
<svg style="position:absolute;left:1570px;top:1004px;" width="16" height="17" viewBox="0 0 16 17" fill="none"><g transform="translate(6.5 6.5) rotate(45)" stroke="#333" stroke-width="1.2" stroke-linecap="round" stroke-linejoin="round"><rect x="-2.9" y="-5.6" width="5.8" height="11.2"/><path d="M-3.7 -5.6 L3.7 -5.6 M-3.7 5.6 L3.7 5.6"/><path d="M2.9 -1.2 L11 -1.2 A1.2 1.2 0 0 1 11 1.2 L2.9 1.2"/></g><path d="M0.3 15.9 L8 15.9" stroke="#333" stroke-width="1.2" stroke-linecap="round" stroke-linejoin="round"/></svg>
<svg style="position:absolute;left:1600px;top:1004px;" width="17" height="17" viewBox="0 0 17 17" fill="none"><g stroke="#333" stroke-width="1.2" stroke-linecap="round" stroke-linejoin="round"><path d="M1 8.9 A7.2 7.2 0 1 0 2.5 3.7"/><path d="M1.5 1.3 L1.8 4.5 L5 4.4"/><path d="M8.2 5.2 L8.2 8.6 L11 11.3"/></g></svg>
<svg style="position:absolute;left:1631.2px;top:1004.4px;" width="12.57" height="14.91" viewBox="0 0 17.7 21" fill="none"><g stroke="#333" stroke-width="1.55" stroke-linecap="round" stroke-linejoin="round"><path d="M16.9 9.6 L16.9 4 Q16.9 0.8 13.7 0.8 L6.6 0.8 L0.8 6.6 L0.8 17 Q0.8 20.2 4 20.2 L10.8 20.2"/><path d="M6.6 0.9 L6.6 4.6 Q6.6 6.6 4.6 6.6 L0.9 6.6"/><path d="M5.6 9.8 L11.6 9.8 M5.6 13.4 L8.8 13.4"/></g><g transform="translate(14.6 15.9) scale(0.9555555555555555)" stroke="#333" stroke-width="1.703197674418605" stroke-linecap="round" fill="none"><path d="M2.2 -2 Q2 -3.1 0.3 -3.1 Q-2.1 -3.1 -2.1 -1.6 Q-2.1 -0.4 0 0 Q2.3 0.45 2.3 1.7 Q2.3 3.2 0 3.2 Q-2.1 3.2 -2.4 1.9"/><path d="M0 -4.5 L0 4.5"/></g></svg>
<div style="position:absolute;left:1783px;top:909px;width:75px;height:75px;border:1.5px solid #a9dcda;border-radius:50%;background:#f5f8fa;"></div>
<div style="position:absolute;left:1787px;top:913px;width:70px;height:70px;border-radius:50%;background:#dcedef;"></div>
<div style="position:absolute;left:1794px;top:920px;width:56px;height:56px;border-radius:50%;background:#7acdc9;"></div>
<svg style="position:absolute;left:1809px;top:935px;" width="26" height="26" viewBox="0 0 26 26" fill="none"><g fill="#fff"><path d="M10.2 9.4 Q10.2 7.7 11.9 7.7 L23.3 7.7 Q25 7.7 25 9.4 L25 19.2 Q25 20.9 23.3 20.9 L23 20.9 L22.5 25 L19 20.9 L11.9 20.9 Q10.2 20.9 10.2 19.2 Z"/><path d="M2.7 1 L17.8 1 Q19.5 1 19.5 2.7 L19.5 13.6 Q19.5 15.3 17.8 15.3 L9.7 15.3 L5 20.8 L4.2 15.3 L2.7 15.3 Q1 15.3 1 13.6 L1 2.7 Q1 1 2.7 1 Z" stroke="#7acdc9" stroke-width="1.3"/></g></svg>
<div style="position:absolute;left:513px;top:161px;width:128px;height:39px;border:1px solid #f00;box-shadow:0 1px 7px rgba(0,0,0,.33), inset 0 1px 7px rgba(0,0,0,.22);"></div>
<div style="position:absolute;left:1548px;top:161px;width:124px;height:46px;border:1px solid #f00;box-shadow:0 1px 7px rgba(0,0,0,.33), inset 0 1px 7px rgba(0,0,0,.22);"></div>
<div style="position:absolute;left:1440px;top:328px;width:65px;height:24px;border:1px solid #f00;box-shadow:0 1px 7px rgba(0,0,0,.33), inset 0 1px 7px rgba(0,0,0,.22);"></div>
<div style="position:absolute;left:1561px;top:328px;width:32px;height:25px;border:1px solid #f00;box-shadow:0 1px 7px rgba(0,0,0,.33), inset 0 1px 7px rgba(0,0,0,.22);"></div>
<div style="position:absolute;left:1620px;top:328px;width:30px;height:24px;border:1px solid #f00;box-shadow:0 1px 7px rgba(0,0,0,.33), inset 0 1px 7px rgba(0,0,0,.22);"></div>
<div style="position:absolute;left:1594px;top:374px;width:26px;height:25px;border:1px solid #f00;box-shadow:0 1px 7px rgba(0,0,0,.33), inset 0 1px 7px rgba(0,0,0,.22);"></div>
<div style="position:absolute;left:1421px;top:241px;width:68px;height:26px;border:1px solid #f00;box-shadow:0 1px 7px rgba(0,0,0,.33), inset 0 1px 7px rgba(0,0,0,.22);"></div>
<div style="position:absolute;left:632.3px;top:148.5px;width:24px;height:24px;background:#f00;border-radius:50%;box-shadow:0 2px 7px rgba(0,0,0,.45);"></div>
<span class="t" style="left:641px;top:154px;font-size:13px;line-height:13px;letter-spacing:0.000px;color:#fff;transform:translate(0.02px,0.10px) scaleX(0.8600);font-weight:bold;">1</span>
<div style="position:absolute;left:1662.5px;top:148.3px;width:24px;height:24px;background:#f00;border-radius:50%;box-shadow:0 2px 7px rgba(0,0,0,.45);"></div>
<span class="t" style="left:1671px;top:153px;font-size:13px;line-height:13px;letter-spacing:0.000px;color:#fff;transform:translate(0.38px,0.90px) scaleX(0.8600);font-weight:bold;">2</span>
<div style="position:absolute;left:1494.7px;top:315.2px;width:24px;height:24px;background:#f00;border-radius:50%;box-shadow:0 2px 7px rgba(0,0,0,.45);"></div>
<span class="t" style="left:1503px;top:320px;font-size:13px;line-height:13px;letter-spacing:0.000px;color:#fff;transform:translate(0.69px,0.80px) scaleX(0.8600);font-weight:bold;">3</span>
<div style="position:absolute;left:1581.5px;top:315.4px;width:24px;height:24px;background:#f00;border-radius:50%;box-shadow:0 2px 7px rgba(0,0,0,.45);"></div>
<span class="t" style="left:1590px;top:320px;font-size:13px;line-height:13px;letter-spacing:0.000px;color:#fff;transform:translate(0.38px,1.00px) scaleX(0.8600);font-weight:bold;">4</span>
<div style="position:absolute;left:1610.4px;top:362.1px;width:24px;height:24px;background:#f00;border-radius:50%;box-shadow:0 2px 7px rgba(0,0,0,.45);"></div>
<span class="t" style="left:1619px;top:367px;font-size:13px;line-height:13px;letter-spacing:0.000px;color:#fff;transform:translate(0.28px,0.70px) scaleX(0.8600);font-weight:bold;">5</span>
<div style="position:absolute;left:1640.5px;top:315.4px;width:24px;height:24px;background:#f00;border-radius:50%;box-shadow:0 2px 7px rgba(0,0,0,.45);"></div>
<span class="t" style="left:1649px;top:320px;font-size:13px;line-height:13px;letter-spacing:0.000px;color:#fff;transform:translate(0.38px,1.00px) scaleX(0.8600);font-weight:bold;">6</span>
<div style="position:absolute;left:1477.7px;top:226.3px;width:24px;height:24px;background:#f00;border-radius:50%;box-shadow:0 2px 7px rgba(0,0,0,.45);"></div>
<span class="t" style="left:1486px;top:231px;font-size:13px;line-height:13px;letter-spacing:0.000px;color:#fff;transform:translate(0.64px,0.90px) scaleX(0.8600);font-weight:bold;">7</span>
</body></html>
